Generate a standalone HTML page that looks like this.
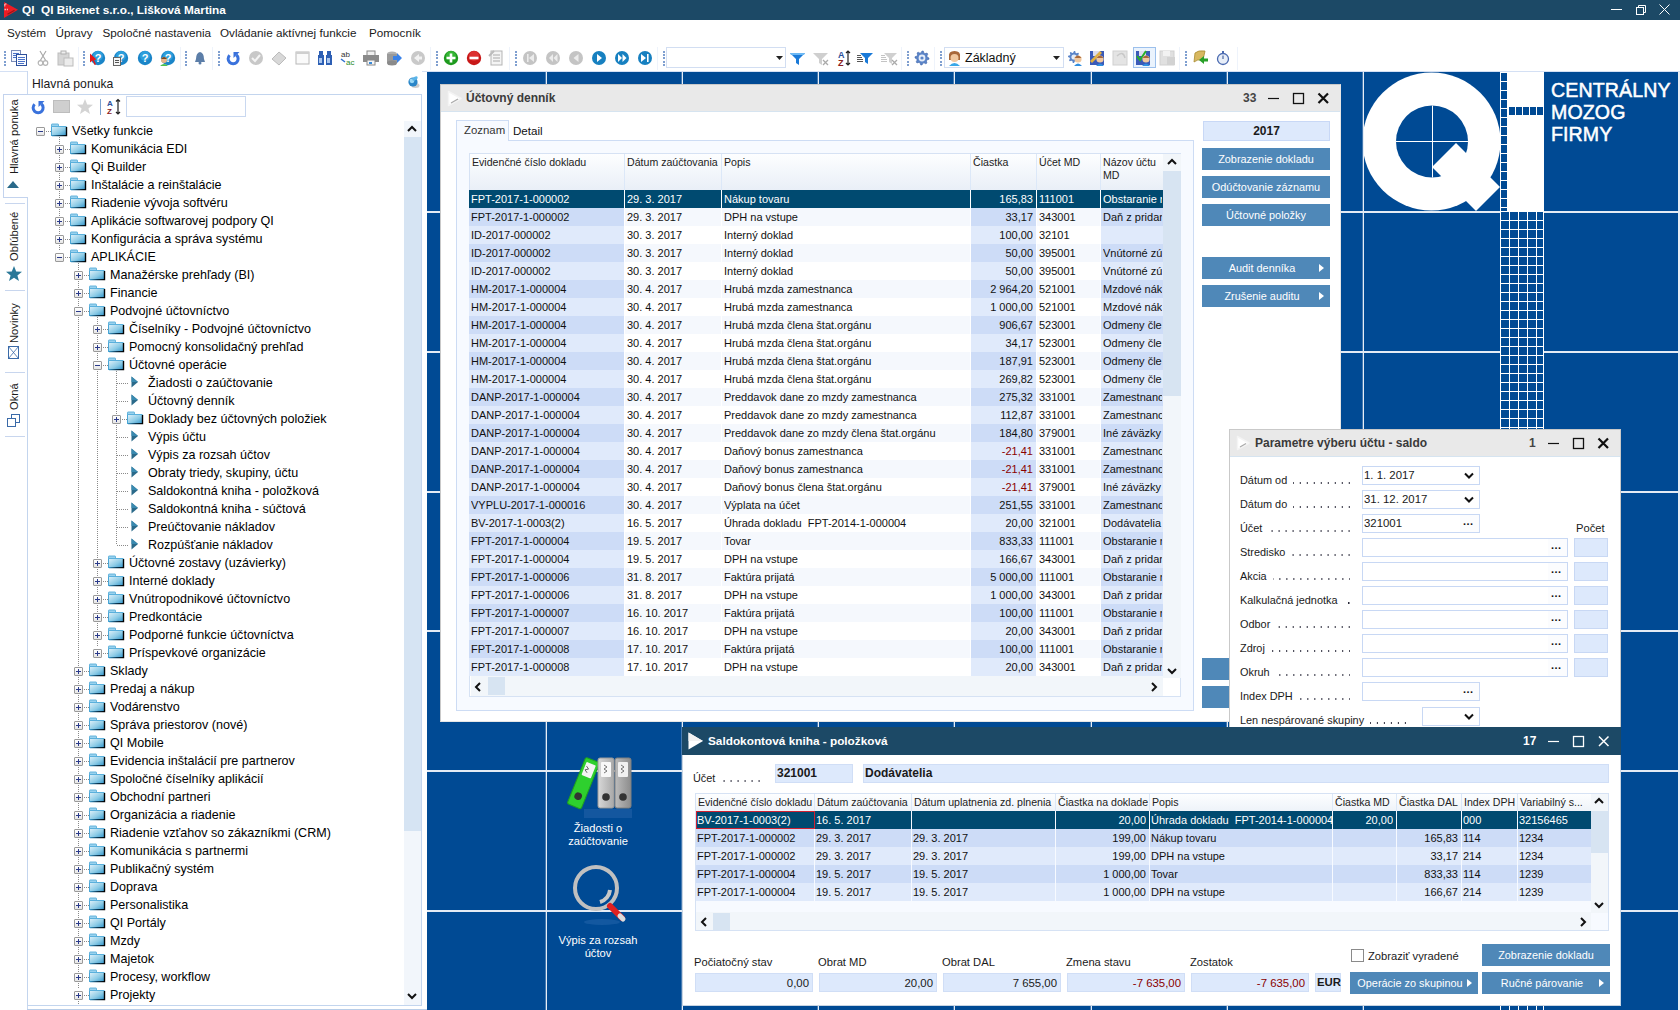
<!DOCTYPE html>
<html><head><meta charset="utf-8">
<style>
*{box-sizing:border-box;margin:0;padding:0}
html,body{width:1680px;height:1010px;overflow:hidden;background:#fff;font-family:"Liberation Sans",sans-serif;color:#1a1a1a}
.a{position:absolute}
.t{position:absolute;height:16px;line-height:16px;white-space:nowrap}
svg{position:absolute;overflow:visible}
</style></head><body>
<div class="a " style="left:0px;top:0px;width:1680px;height:20px;background:#1c4966"></div>
<svg style="left:0;top:0" width="24" height="20"><path d="M4 2 L18 9.7 L4 18 Z" fill="#ec1c24"/><path d="M7.5 14.2 L14.5 10.2" stroke="#9a1418" stroke-width="1.2"/><path d="M4.8 6.5 V4 H6.5" stroke="#f8c8c8" stroke-width="1" fill="none"/><path d="M4.5 9.5 H8" stroke="#f4b8b8" stroke-width="1.4" stroke-dasharray="1.5 0.8"/></svg>
<div class="t " style="left:22px;top:2px;color:#fff;font-weight:bold;font-size:11.8px">QI&nbsp; QI Bikenet s.r.o., Lišková Martina</div>
<svg style="left:1600px;top:0" width="80" height="20" fill="none" stroke="#fff" stroke-width="1"><path d="M11 9.5 H22"/><rect x="36.5" y="7.5" width="7" height="7"/><path d="M38.5 7.5 V5.5 H45.5 V12.5 H43.5"/><path d="M59.5 4.5 L69.5 14.5 M69.5 4.5 L59.5 14.5"/></svg>
<div class="t " style="left:7px;top:25px;font-size:11.7px;color:#1a1a1a">Systém</div>
<div class="t " style="left:55.5px;top:25px;font-size:11.7px;color:#1a1a1a">Úpravy</div>
<div class="t " style="left:102.5px;top:25px;font-size:11.7px;color:#1a1a1a">Spoločné nastavenia</div>
<div class="t " style="left:220px;top:25px;font-size:11.7px;color:#1a1a1a">Ovládanie aktívnej funkcie</div>
<div class="t " style="left:369px;top:25px;font-size:11.7px;color:#1a1a1a">Pomocník</div>
<div class="a " style="left:0px;top:71px;width:1680px;height:1px;background:#d4e0f4"></div>
<div class="a " style="left:4px;top:51.0px;width:2px;height:2px;background:#7f9fd0"></div><div class="a " style="left:4px;top:54.2px;width:2px;height:2px;background:#7f9fd0"></div><div class="a " style="left:4px;top:57.4px;width:2px;height:2px;background:#7f9fd0"></div><div class="a " style="left:4px;top:60.6px;width:2px;height:2px;background:#7f9fd0"></div><div class="a " style="left:4px;top:63.8px;width:2px;height:2px;background:#7f9fd0"></div>
<svg style="left:11px;top:50px" width="16" height="16" viewBox="0 0 16 16"><rect x="0.5" y="0.5" width="9" height="11" fill="#f4f7fd" stroke="#7a8cb8"/><path d="M2 3.5h6M2 5.5h6M2 7.5h6" stroke="#4a72c8"/><rect x="5.5" y="4.5" width="10" height="11" fill="#fafcff" stroke="#2d4f9a"/><path d="M7 7.5h7M7 9.5h7M7 11.5h7M7 13.5h6" stroke="#4a72c8"/></svg>
<svg style="left:37px;top:50px" width="12" height="16" viewBox="0 0 12 16"><path d="M3 1 L9 11 M9 1 L3 11" stroke="#a9a9a9" stroke-width="1.2"/><circle cx="3.5" cy="13" r="2.3" fill="none" stroke="#b5b5b5" stroke-width="1.2"/><circle cx="8.5" cy="13" r="2.3" fill="none" stroke="#b5b5b5" stroke-width="1.2"/></svg>
<svg style="left:57px;top:50px" width="16" height="16" viewBox="0 0 16 16"><rect x="1" y="3" width="11" height="12" fill="#d6d6d6" stroke="#bdbdbd"/><rect x="4" y="1" width="5" height="3" fill="#eee" stroke="#b0b0b0"/><rect x="7" y="8" width="9" height="8" fill="#ececec" stroke="#bdbdbd"/></svg>
<div class="a " style="left:83px;top:51.0px;width:2px;height:2px;background:#7f9fd0"></div><div class="a " style="left:83px;top:54.2px;width:2px;height:2px;background:#7f9fd0"></div><div class="a " style="left:83px;top:57.4px;width:2px;height:2px;background:#7f9fd0"></div><div class="a " style="left:83px;top:60.6px;width:2px;height:2px;background:#7f9fd0"></div><div class="a " style="left:83px;top:63.8px;width:2px;height:2px;background:#7f9fd0"></div>
<svg style="left:90px;top:50px" width="16" height="16" viewBox="0 0 16 16"><circle cx="8" cy="8" r="7.2" fill="#1a85c8"/><circle cx="8" cy="6" r="5" fill="#3ab0ea" opacity="0.6"/><text x="8" y="12" font-size="11" font-weight="bold" fill="#fff" text-anchor="middle" font-family="Liberation Sans">?</text><path d="M0 3.5 L6.5 9.5 L4 10 L6 14.5 L4.6 15 L2.6 10.6 L0 12.5Z" fill="#e81818"/></svg>
<svg style="left:113px;top:50px" width="16" height="16" viewBox="0 0 16 16"><circle cx="8" cy="8" r="7.2" fill="#1a85c8"/><circle cx="8" cy="6" r="5" fill="#3ab0ea" opacity="0.6"/><text x="8" y="12" font-size="11" font-weight="bold" fill="#fff" text-anchor="middle" font-family="Liberation Sans">?</text><rect x="0.5" y="7.5" width="7" height="8" fill="#f6f6f6" stroke="#666"/><path d="M2 10.5h4M2 12.5h4" stroke="#555"/></svg>
<svg style="left:137px;top:50px" width="16" height="16" viewBox="0 0 16 16"><circle cx="8" cy="8" r="7.2" fill="#1a85c8"/><circle cx="8" cy="6" r="5" fill="#3ab0ea" opacity="0.6"/><text x="8" y="12" font-size="11" font-weight="bold" fill="#fff" text-anchor="middle" font-family="Liberation Sans">?</text></svg>
<svg style="left:160px;top:50px" width="16" height="16" viewBox="0 0 16 16"><circle cx="8" cy="8" r="7.2" fill="#1a85c8"/><circle cx="8" cy="6" r="5" fill="#3ab0ea" opacity="0.6"/><text x="8" y="12" font-size="11" font-weight="bold" fill="#fff" text-anchor="middle" font-family="Liberation Sans">?</text><circle cx="4" cy="10" r="3" fill="#e8b48a"/><path d="M1 9 Q4 5 7 9" fill="#7a4a24"/><path d="M0 16 Q4 12 8 16Z" fill="#4cc04c"/></svg>
<div class="a " style="left:185px;top:51.0px;width:2px;height:2px;background:#7f9fd0"></div><div class="a " style="left:185px;top:54.2px;width:2px;height:2px;background:#7f9fd0"></div><div class="a " style="left:185px;top:57.4px;width:2px;height:2px;background:#7f9fd0"></div><div class="a " style="left:185px;top:60.6px;width:2px;height:2px;background:#7f9fd0"></div><div class="a " style="left:185px;top:63.8px;width:2px;height:2px;background:#7f9fd0"></div>
<svg style="left:194px;top:50px" width="12" height="16" viewBox="0 0 12 16"><path d="M6 2 Q2 3 2 9 L1 12 H11 L10 9 Q10 3 6 2Z" fill="#5c7ea8"/><circle cx="6" cy="13" r="1.5" fill="#5c7ea8"/></svg>
<div class="a " style="left:218px;top:51.0px;width:2px;height:2px;background:#7f9fd0"></div><div class="a " style="left:218px;top:54.2px;width:2px;height:2px;background:#7f9fd0"></div><div class="a " style="left:218px;top:57.4px;width:2px;height:2px;background:#7f9fd0"></div><div class="a " style="left:218px;top:60.6px;width:2px;height:2px;background:#7f9fd0"></div><div class="a " style="left:218px;top:63.8px;width:2px;height:2px;background:#7f9fd0"></div>
<svg style="left:226px;top:50px" width="16" height="16" viewBox="0 0 16 16"><path d="M3.6 5.2 A5 5 0 1 0 10.4 5.0" fill="none" stroke="#3a72dc" stroke-width="3"/><path d="M7.5 2 H13.5 L7.5 8Z" fill="#3a72dc"/></svg>
<svg style="left:248px;top:50px" width="16" height="16" viewBox="0 0 16 16"><circle cx="8" cy="8" r="7" fill="#c8c8c8"/><path d="M4 8 L7 11 L12 5" stroke="#f4f4f4" stroke-width="2" fill="none"/></svg>
<svg style="left:271px;top:50px" width="16" height="16" viewBox="0 0 16 16"><path d="M1 9 L8 2 L15 8 L8 15Z" fill="#d8d8d8" stroke="#bbb"/></svg>
<svg style="left:295px;top:50px" width="16" height="16" viewBox="0 0 16 16"><rect x="1" y="2" width="13" height="12" fill="#fafafa" stroke="#b8b8b8"/><rect x="1" y="2" width="13" height="2" fill="#cfcfcf"/></svg>
<svg style="left:317px;top:50px" width="16" height="16" viewBox="0 0 16 16"><rect x="1" y="5" width="6" height="10" fill="#2d5fb4"/><rect x="9" y="5" width="6" height="10" fill="#2d5fb4"/><rect x="2" y="1" width="4" height="5" fill="#2d5fb4"/><rect x="10" y="1" width="4" height="5" fill="#2d5fb4"/><rect x="2" y="8" width="3" height="5" fill="#aac6ee"/><rect x="10" y="8" width="3" height="5" fill="#aac6ee"/></svg>
<svg style="left:340px;top:50px" width="16" height="16" viewBox="0 0 16 16"><text x="1" y="7" font-size="8" fill="#333" font-family="Liberation Sans">ab</text><text x="6" y="15" font-size="8" fill="#2a8a2a" font-family="Liberation Sans">ac</text><path d="M1 9 L5 12" stroke="#3070d0" stroke-width="1.5"/></svg>
<svg style="left:363px;top:50px" width="16" height="16" viewBox="0 0 16 16"><rect x="4" y="1" width="8" height="5" fill="#f0f0f0" stroke="#888"/><rect x="0" y="5" width="16" height="7" fill="#8a8a8a"/><rect x="4" y="10" width="8" height="5" fill="#f5f5f5" stroke="#888"/><rect x="6" y="12" width="3" height="2" fill="#3a8ad8"/></svg>
<svg style="left:386px;top:50px" width="16" height="16" viewBox="0 0 16 16"><ellipse cx="6" cy="4" rx="5" ry="2.5" fill="#b0b0b0"/><rect x="1" y="4" width="10" height="9" fill="#9a9a9a"/><ellipse cx="6" cy="13" rx="5" ry="2.5" fill="#8a8a8a"/><path d="M7 6 H11 V3 L16 8 L11 13 V10 H7Z" fill="#3a82e8"/></svg>
<svg style="left:410px;top:50px" width="16" height="16" viewBox="0 0 16 16"><circle cx="8" cy="8" r="7" fill="#c9c9c9"/><path d="M9 4 L4 8 L9 12 V9.5 H12 V6.5 H9Z" fill="#f2f2f2"/></svg>
<div class="a " style="left:436px;top:51.0px;width:2px;height:2px;background:#7f9fd0"></div><div class="a " style="left:436px;top:54.2px;width:2px;height:2px;background:#7f9fd0"></div><div class="a " style="left:436px;top:57.4px;width:2px;height:2px;background:#7f9fd0"></div><div class="a " style="left:436px;top:60.6px;width:2px;height:2px;background:#7f9fd0"></div><div class="a " style="left:436px;top:63.8px;width:2px;height:2px;background:#7f9fd0"></div>
<svg style="left:443px;top:50px" width="16" height="16" viewBox="0 0 16 16"><circle cx="8" cy="8" r="7.2" fill="#1e9a1e"/><circle cx="8" cy="6" r="5" fill="#4cd04c" opacity="0.5"/><path d="M8 3.5V12.5M3.5 8H12.5" stroke="#fff" stroke-width="2.6"/></svg>
<svg style="left:466px;top:50px" width="16" height="16" viewBox="0 0 16 16"><circle cx="8" cy="8" r="7.2" fill="#c81818"/><circle cx="8" cy="6" r="5" fill="#f04848" opacity="0.5"/><path d="M3.5 8H12.5" stroke="#fff" stroke-width="2.6"/></svg>
<svg style="left:488px;top:50px" width="16" height="16" viewBox="0 0 16 16"><rect x="3" y="1" width="11" height="14" fill="#f4f4f4" stroke="#b5b5b5"/><path d="M5 5h7M5 8h7M5 11h7" stroke="#aaa"/><path d="M1 6 L6 1" stroke="#bbb" stroke-width="2"/></svg>
<div class="a " style="left:515px;top:51.0px;width:2px;height:2px;background:#7f9fd0"></div><div class="a " style="left:515px;top:54.2px;width:2px;height:2px;background:#7f9fd0"></div><div class="a " style="left:515px;top:57.4px;width:2px;height:2px;background:#7f9fd0"></div><div class="a " style="left:515px;top:60.6px;width:2px;height:2px;background:#7f9fd0"></div><div class="a " style="left:515px;top:63.8px;width:2px;height:2px;background:#7f9fd0"></div>
<svg style="left:522px;top:50px" width="16" height="16" viewBox="0 0 16 16"><circle cx="8" cy="8" r="7" fill="#c4c4c4"/><path d="M5 4h1.6v8H5Z M12 4 L7 8 L12 12Z" fill="#ececec"/></svg>
<svg style="left:545px;top:50px" width="16" height="16" viewBox="0 0 16 16"><circle cx="8" cy="8" r="7" fill="#c4c4c4"/><path d="M8 4 L4 8 L8 12Z M12.5 4 L8.5 8 L12.5 12Z" fill="#ececec"/></svg>
<svg style="left:568px;top:50px" width="16" height="16" viewBox="0 0 16 16"><circle cx="8" cy="8" r="7" fill="#c4c4c4"/><path d="M10.5 4 L5.5 8 L10.5 12Z" fill="#ececec"/></svg>
<svg style="left:591px;top:50px" width="16" height="16" viewBox="0 0 16 16"><circle cx="8" cy="8" r="7" fill="#1780c0"/><path d="M6 4 L11 8 L6 12Z" fill="#fff"/></svg>
<svg style="left:614px;top:50px" width="16" height="16" viewBox="0 0 16 16"><circle cx="8" cy="8" r="7" fill="#1780c0"/><path d="M4 4 L8 8 L4 12Z M8.5 4 L12.5 8 L8.5 12Z" fill="#fff"/></svg>
<svg style="left:637px;top:50px" width="16" height="16" viewBox="0 0 16 16"><circle cx="8" cy="8" r="7" fill="#1780c0"/><path d="M4 4 L9 8 L4 12Z M10 4h1.6v8H10Z" fill="#fff"/></svg>
<div class="a " style="left:663px;top:51.0px;width:2px;height:2px;background:#7f9fd0"></div><div class="a " style="left:663px;top:54.2px;width:2px;height:2px;background:#7f9fd0"></div><div class="a " style="left:663px;top:57.4px;width:2px;height:2px;background:#7f9fd0"></div><div class="a " style="left:663px;top:60.6px;width:2px;height:2px;background:#7f9fd0"></div><div class="a " style="left:663px;top:63.8px;width:2px;height:2px;background:#7f9fd0"></div>
<div class="a " style="left:666px;top:47px;width:120px;height:21px;border:1px solid #d2def2;background:#fff"></div>
<svg style="left:775px;top:50px" width="10" height="16" viewBox="0 0 10 16"><path d="M1 6 H8 L4.5 10Z" fill="#222"/></svg>
<svg style="left:790px;top:50px" width="16" height="16" viewBox="0 0 16 16"><path d="M0 3 H15 L9 9 V15 L6 13 V9Z" fill="#1a7ad8"/><path d="M0 3 H15 L14 5 H1Z" fill="#6cb8f4"/></svg>
<svg style="left:813px;top:50px" width="16" height="16" viewBox="0 0 16 16"><path d="M0 3 H15 L9 9 V15 L6 13 V9Z" fill="#cfcfcf"/><path d="M10 10 L15 15 M15 10 L10 15" stroke="#aaa" stroke-width="1.3"/></svg>
<svg style="left:838px;top:50px" width="13" height="16" viewBox="0 0 13 16"><text x="0" y="7.5" font-size="9" font-weight="bold" fill="#2b4f9a" font-family="Liberation Sans">A</text><text x="0" y="15.5" font-size="9" font-weight="bold" fill="#8a2020" font-family="Liberation Sans">Z</text><path d="M10 1V15M8 3L10 1L12 3M8 13L10 15L12 13" stroke="#222" stroke-width="1.2" fill="none"/></svg>
<svg style="left:857px;top:50px" width="16" height="16" viewBox="0 0 16 16"><path d="M3 3 H16 L11 8 V14 L8 12 V8Z" fill="#1a7ad8"/><path d="M0 5.5h4M0 7.5h5M0 9.5h6M0 11.5h6" stroke="#555" stroke-width="1"/></svg>
<svg style="left:881px;top:50px" width="16" height="16" viewBox="0 0 16 16"><path d="M3 3 H16 L11 8 V14 L8 12 V8Z" fill="#d0d0d0"/><path d="M0 5.5h4M0 7.5h5M0 9.5h6M0 11.5h6" stroke="#c4c4c4" stroke-width="1"/><path d="M11 10 L16 15 M16 10 L11 15" stroke="#aaa" stroke-width="1.3"/></svg>
<div class="a " style="left:907px;top:51.0px;width:2px;height:2px;background:#7f9fd0"></div><div class="a " style="left:907px;top:54.2px;width:2px;height:2px;background:#7f9fd0"></div><div class="a " style="left:907px;top:57.4px;width:2px;height:2px;background:#7f9fd0"></div><div class="a " style="left:907px;top:60.6px;width:2px;height:2px;background:#7f9fd0"></div><div class="a " style="left:907px;top:63.8px;width:2px;height:2px;background:#7f9fd0"></div>
<svg style="left:915px;top:50px" width="14" height="16" viewBox="0 0 14 16"><path d="M7.00,1.00 L8.37,1.13 L8.99,3.20 L9.89,3.68 L11.95,3.05 L12.82,4.11 L11.80,6.01 L12.10,6.99 L14.00,8.00 L13.87,9.37 L11.80,9.99 L11.32,10.89 L11.95,12.95 L10.89,13.82 L8.99,12.80 L8.01,13.10 L7.00,15.00 L5.63,14.87 L5.01,12.80 L4.11,12.32 L2.05,12.95 L1.18,11.89 L2.20,9.99 L1.90,9.01 L0.00,8.00 L0.13,6.63 L2.20,6.01 L2.68,5.11 L2.05,3.05 L3.11,2.18 L5.01,3.20 L5.99,2.90Z" fill="#5a84c8" stroke="#3a62a8" stroke-width="0.6"/><circle cx="7" cy="8" r="3.4" fill="#e4ecf8"/><circle cx="7" cy="8" r="1.6" fill="#5a84c8"/></svg>
<div class="a " style="left:940px;top:51.0px;width:2px;height:2px;background:#7f9fd0"></div><div class="a " style="left:940px;top:54.2px;width:2px;height:2px;background:#7f9fd0"></div><div class="a " style="left:940px;top:57.4px;width:2px;height:2px;background:#7f9fd0"></div><div class="a " style="left:940px;top:60.6px;width:2px;height:2px;background:#7f9fd0"></div><div class="a " style="left:940px;top:63.8px;width:2px;height:2px;background:#7f9fd0"></div>
<div class="a " style="left:944px;top:47px;width:120px;height:21px;border:1px solid #d2def2;background:#fff"></div>
<svg style="left:947px;top:50px" width="16" height="16" viewBox="0 0 16 16"><path d="M2 7 Q1 1 7.5 1 Q14 1 13 7 L13 10 H2Z" fill="#a8683a"/><circle cx="7.5" cy="8" r="4" fill="#f0c8a0"/><path d="M2 16 Q7.5 10 13 16Z" fill="#3aa8e8"/></svg>
<div class="t " style="left:965px;top:50px;font-size:12.5px;color:#111">Základný</div>
<svg style="left:1052px;top:50px" width="10" height="16" viewBox="0 0 10 16"><path d="M1 6 H8 L4.5 10Z" fill="#222"/></svg>
<svg style="left:1068px;top:50px" width="16" height="16" viewBox="0 0 16 16"><path d="M6.00,1.00 L7.17,1.12 L7.68,2.93 L8.44,3.34 L10.24,2.76 L10.99,3.67 L10.07,5.32 L10.32,6.14 L12.00,7.00 L11.88,8.17 L10.07,8.68 L9.66,9.44 L10.24,11.24 L9.33,11.99 L7.68,11.07 L6.86,11.32 L6.00,13.00 L4.83,12.88 L4.32,11.07 L3.56,10.66 L1.76,11.24 L1.01,10.33 L1.93,8.68 L1.68,7.86 L0.00,7.00 L0.12,5.83 L1.93,5.32 L2.34,4.56 L1.76,2.76 L2.67,2.01 L4.32,2.93 L5.14,2.68Z" fill="#5a84c8"/><circle cx="6" cy="7" r="2.6" fill="#e4ecf8"/><circle cx="10" cy="9" r="3.6" fill="#f0c8a0"/><path d="M6.5 8 Q10 3 13.5 8" fill="#a8683a"/><path d="M6 16 Q10 11 14 16Z" fill="#2f8ee0"/></svg>
<svg style="left:1090px;top:50px" width="16" height="16" viewBox="0 0 16 16"><rect x="0" y="1" width="14" height="14" fill="#3a5ab8"/><rect x="3" y="1" width="7" height="5" fill="#dde"/><path d="M0 11 L10 1 L12 3 L2 13Z" fill="#e0b040"/><circle cx="10" cy="9" r="3.6" fill="#f0c8a0"/><path d="M6.5 8 Q10 3 13.5 8" fill="#a8683a"/><path d="M6 16 Q10 11 14 16Z" fill="#2f8ee0"/></svg>
<svg style="left:1113px;top:50px" width="16" height="16" viewBox="0 0 16 16"><rect x="0" y="1" width="14" height="14" fill="#e4e4e4" stroke="#d0d0d0"/><path d="M4 6 Q10 0 12 8" stroke="#c8c8c8" fill="none" stroke-width="1.5"/></svg>
<div class="a " style="left:1133px;top:47px;width:23px;height:21px;border:1px solid #9cc0ec;background:#eaf3fd"></div>
<svg style="left:1136px;top:50px" width="16" height="16" viewBox="0 0 16 16"><rect x="0" y="1" width="14" height="14" fill="#3a5ab8"/><rect x="3" y="1" width="7" height="5" fill="#dde"/><path d="M1 6 L4 10 L10 1" stroke="#28b028" stroke-width="2" fill="none"/><circle cx="10" cy="9" r="3.6" fill="#f0c8a0"/><path d="M6.5 8 Q10 3 13.5 8" fill="#a8683a"/><path d="M6 16 Q10 11 14 16Z" fill="#2f8ee0"/></svg>
<svg style="left:1160px;top:50px" width="16" height="16" viewBox="0 0 16 16"><rect x="0" y="1" width="14" height="14" fill="#e0e0e0" stroke="#d0d0d0"/><rect x="3" y="1" width="7" height="5" fill="#f2f2f2"/><rect x="7" y="7" width="8" height="8" fill="#d2d2d2"/></svg>
<div class="a " style="left:1185px;top:51.0px;width:2px;height:2px;background:#7f9fd0"></div><div class="a " style="left:1185px;top:54.2px;width:2px;height:2px;background:#7f9fd0"></div><div class="a " style="left:1185px;top:57.4px;width:2px;height:2px;background:#7f9fd0"></div><div class="a " style="left:1185px;top:60.6px;width:2px;height:2px;background:#7f9fd0"></div><div class="a " style="left:1185px;top:63.8px;width:2px;height:2px;background:#7f9fd0"></div>
<svg style="left:1193px;top:50px" width="16" height="16" viewBox="0 0 16 16"><path d="M2 3 Q5 0 12 1 L10 10 Q4 9 1 12Z" fill="#d8b860" stroke="#a88a30" stroke-width="0.8"/><path d="M6 10 L11 6 V8.5 H15 V11.5 H11 V14Z" fill="#28a028"/></svg>
<svg style="left:1217px;top:50px" width="12" height="16" viewBox="0 0 12 16"><circle cx="6" cy="9" r="5.5" fill="#e8eef8" stroke="#4a6ab0" stroke-width="1.3"/><rect x="5" y="1" width="2" height="3" fill="#4a6ab0"/><path d="M6 9 V5.5" stroke="#2a4a90" stroke-width="1"/></svg>
<div class="a " style="left:2px;top:47px;width:77px;height:23px;border-right:1px solid #eef3fb"></div>
<div class="a " style="left:81px;top:47px;width:100px;height:23px;border-right:1px solid #eef3fb"></div>
<div class="a " style="left:183px;top:47px;width:30px;height:23px;border-right:1px solid #eef3fb"></div>
<div class="a " style="left:216px;top:47px;width:215px;height:23px;border-right:1px solid #eef3fb"></div>
<div class="a " style="left:433px;top:47px;width:77px;height:23px;border-right:1px solid #eef3fb"></div>
<div class="a " style="left:512px;top:47px;width:146px;height:23px;border-right:1px solid #eef3fb"></div>
<div class="a " style="left:660px;top:47px;width:242px;height:23px;border-right:1px solid #eef3fb"></div>
<div class="a " style="left:904px;top:47px;width:31px;height:23px;border-right:1px solid #eef3fb"></div>
<div class="a " style="left:937px;top:47px;width:243px;height:23px;border-right:1px solid #eef3fb"></div>
<div class="a " style="left:1182px;top:47px;width:56px;height:23px;border-right:1px solid #eef3fb"></div>
<div class="a " style="left:27px;top:71px;width:1px;height:939px;background:#c9d8f0"></div>
<div class="a " style="left:3px;top:94px;width:25px;height:104px;border:1px solid #c3d3ee;border-right:none;background:#fff"></div>
<div class="t" style="left:14px;top:174px;transform-origin:0 0;transform:rotate(-90deg);font-size:11.2px;line-height:16px;height:16px;margin-left:-8px;color:#1a1a1a">Hlavná ponuka</div>
<svg style="left:6px;top:179px" width="16" height="10"><path d="M1 9 L7 2 L13 9Z" fill="#2a6a8a"/></svg>
<div class="a " style="left:5px;top:203px;width:20px;height:1px;background:#c8d6ee"></div>
<div class="t" style="left:14px;top:261px;transform-origin:0 0;transform:rotate(-90deg);font-size:11.2px;line-height:16px;height:16px;margin-left:-8px;color:#1a1a1a">Obľúbené</div>
<svg style="left:5px;top:265px" width="18" height="18"><path d="M9 1 L11.2 6.6 L17 6.8 L12.4 10.4 L14 16 L9 12.8 L4 16 L5.6 10.4 L1 6.8 L6.8 6.6Z" fill="#2a7898"/></svg>
<div class="a " style="left:5px;top:290px;width:20px;height:1px;background:#c8d6ee"></div>
<div class="t" style="left:14px;top:343px;transform-origin:0 0;transform:rotate(-90deg);font-size:11.2px;line-height:16px;height:16px;margin-left:-8px;color:#1a1a1a">Novinky</div>
<svg style="left:8px;top:346px" width="12" height="14"><rect x="0.5" y="0.5" width="10" height="12" fill="none" stroke="#3a6aa8"/><path d="M0.5 0.5 L10.5 12.5 M10.5 0.5 L0.5 12.5" stroke="#3a6aa8" stroke-width="0.8"/></svg>
<div class="a " style="left:5px;top:372px;width:20px;height:1px;background:#c8d6ee"></div>
<div class="t" style="left:14px;top:410px;transform-origin:0 0;transform:rotate(-90deg);font-size:11.2px;line-height:16px;height:16px;margin-left:-8px;color:#1a1a1a">Okná</div>
<svg style="left:7px;top:414px" width="14" height="14"><rect x="4.5" y="0.5" width="8" height="8" fill="#fff" stroke="#3a6aa8"/><rect x="0.5" y="4.5" width="8" height="8" fill="#fff" stroke="#3a6aa8"/></svg>
<div class="a " style="left:5px;top:436px;width:20px;height:1px;background:#c8d6ee"></div>
<div class="a " style="left:28px;top:71px;width:394px;height:23px;background:#fff"></div>
<div class="a " style="left:27px;top:94px;width:395px;height:912px;border:1px solid #c3d5ee;background:#fff"></div>
<div class="a " style="left:27px;top:95px;width:1px;height:102px;background:#fff"></div>
<div class="t " style="left:32px;top:76px;font-size:12.2px;color:#1a1a1a">Hlavná ponuka</div>
<svg style="left:406px;top:75px" width="16" height="16"><ellipse cx="9.5" cy="10.5" rx="4" ry="2.5" fill="#999" opacity="0.5"/><circle cx="7" cy="7" r="4.6" fill="#2a86c8"/><circle cx="6" cy="5.8" r="2.4" fill="#9ad8f6"/><ellipse cx="9" cy="3.5" rx="3" ry="1.6" fill="#5ab4e8" transform="rotate(-30 9 3.5)"/></svg>
<svg style="left:31px;top:99px" width="16" height="16"><path d="M3.6 5.2 A5 5 0 1 0 10.4 5.0" fill="none" stroke="#3a72dc" stroke-width="3"/><path d="M7.5 2 H13.5 L7.5 8Z" fill="#3a72dc"/></svg>
<div class="a " style="left:53px;top:100px;width:17px;height:13px;background:#cfcfcf;border:1px solid #bdbdbd"></div>
<svg style="left:76px;top:98px" width="18" height="18"><path d="M9 1 L11.2 6.6 L17 6.8 L12.4 10.4 L14 16 L9 12.8 L4 16 L5.6 10.4 L1 6.8 L6.8 6.6Z" fill="#d4d4d4"/></svg>
<div class="a " style="left:100px;top:99px;width:1px;height:16px;background:#7aa0d0"></div>
<svg style="left:107px;top:98px" width="16" height="18"><text x="0" y="8" font-size="8" font-weight="bold" fill="#2b4f9a" font-family="Liberation Sans">A</text><text x="0" y="16" font-size="8" font-weight="bold" fill="#8a2020" font-family="Liberation Sans">Z</text><path d="M11 1.5V16M9 3.5L11 1.5L13 3.5M9 14L11 16L13 14" stroke="#222" stroke-width="1.2" fill="none"/></svg>
<div class="a " style="left:126px;top:96px;width:120px;height:21px;border:1px solid #c9d8f0;background:#fff"></div>
<div class="a " style="left:27px;top:1009px;width:400px;height:1px;background:#b8cde8"></div>
<div class="a " style="left:404px;top:121px;width:17px;height:884px;background:#f2f6fb"></div>
<div class="a " style="left:404px;top:137px;width:17px;height:694px;background:#d6e4f3"></div>
<svg style="left:405px;top:123px" width="14" height="12"><path d="M3 8 L7 4 L11 8" stroke="#111" stroke-width="2" fill="none"/></svg>
<svg style="left:405px;top:990px" width="14" height="12"><path d="M3 4 L7 8 L11 4" stroke="#111" stroke-width="2" fill="none"/></svg>
<div class="a " style="left:59px;top:137px;width:1px;height:114px;background:repeating-linear-gradient(180deg,#8a8a8a 0 1px,transparent 1px 2px)"></div>
<div class="a " style="left:78px;top:263px;width:1px;height:726px;background:repeating-linear-gradient(180deg,#8a8a8a 0 1px,transparent 1px 2px)"></div>
<div class="a " style="left:97px;top:317px;width:1px;height:330px;background:repeating-linear-gradient(180deg,#8a8a8a 0 1px,transparent 1px 2px)"></div>
<div class="a " style="left:116px;top:371px;width:1px;height:174px;background:repeating-linear-gradient(180deg,#8a8a8a 0 1px,transparent 1px 2px)"></div>
<div class="a " style="left:78px;top:999px;width:1px;height:6px;background:repeating-linear-gradient(180deg,#8a8a8a 0 1px,transparent 1px 2px)"></div>
<svg style="left:0;top:0" width="0" height="0"><defs><linearGradient id="fgb" x1="0" y1="0" x2="1" y2="1"><stop offset="0" stop-color="#e2f2fa"/><stop offset="0.55" stop-color="#8ccbe6"/><stop offset="1" stop-color="#2a90c8"/></linearGradient><linearGradient id="fgd" x1="0" y1="0" x2="1" y2="0"><stop offset="0" stop-color="#3a98c8"/><stop offset="0.5" stop-color="#0a3a58"/><stop offset="1" stop-color="#000"/></linearGradient></defs></svg>
<div class="a " style="left:36px;top:127px;width:9px;height:9px;border:1px solid #9a9a9a;border-radius:1px;background:linear-gradient(#fff,#e6e6e6)"></div>
<div class="a " style="left:38px;top:131px;width:5px;height:1px;background:#2a3a8a"></div>
<div class="a " style="left:46px;top:131px;width:5px;height:1px;background:repeating-linear-gradient(90deg,#8a8a8a 0 1px,transparent 1px 2px)"></div>
<svg style="left:51px;top:123px" width="16" height="14"><rect x="0.5" y="1" width="7" height="3" rx="0.5" fill="#9ad2ee" stroke="#5aaed8" stroke-width="0.9"/><rect x="0.5" y="3.5" width="15" height="9.5" fill="url(#fgb)"/><path d="M0.5 3.5 H15.5" stroke="#5ab0dc" stroke-width="1"/><path d="M0.5 3.5 V13" stroke="#4aa6d6" stroke-width="1"/><path d="M1 12.6 H15.5 V4" stroke="url(#fgd)" stroke-width="1.4" fill="none"/></svg>
<div class="t " style="left:72px;top:123px;font-size:12.55px;color:#000">Všetky funkcie</div>
<div class="a " style="left:55px;top:145px;width:9px;height:9px;border:1px solid #9a9a9a;border-radius:1px;background:linear-gradient(#fff,#e6e6e6)"></div>
<div class="a " style="left:57px;top:149px;width:5px;height:1px;background:#2a3a8a"></div>
<div class="a " style="left:59px;top:147px;width:1px;height:5px;background:#2a3a8a"></div>
<div class="a " style="left:65px;top:149px;width:5px;height:1px;background:repeating-linear-gradient(90deg,#8a8a8a 0 1px,transparent 1px 2px)"></div>
<svg style="left:70px;top:141px" width="16" height="14"><rect x="0.5" y="1" width="7" height="3" rx="0.5" fill="#9ad2ee" stroke="#5aaed8" stroke-width="0.9"/><rect x="0.5" y="3.5" width="15" height="9.5" fill="url(#fgb)"/><path d="M0.5 3.5 H15.5" stroke="#5ab0dc" stroke-width="1"/><path d="M0.5 3.5 V13" stroke="#4aa6d6" stroke-width="1"/><path d="M1 12.6 H15.5 V4" stroke="url(#fgd)" stroke-width="1.4" fill="none"/></svg>
<div class="t " style="left:91px;top:141px;font-size:12.55px;color:#000">Komunikácia EDI</div>
<div class="a " style="left:55px;top:163px;width:9px;height:9px;border:1px solid #9a9a9a;border-radius:1px;background:linear-gradient(#fff,#e6e6e6)"></div>
<div class="a " style="left:57px;top:167px;width:5px;height:1px;background:#2a3a8a"></div>
<div class="a " style="left:59px;top:165px;width:1px;height:5px;background:#2a3a8a"></div>
<div class="a " style="left:65px;top:167px;width:5px;height:1px;background:repeating-linear-gradient(90deg,#8a8a8a 0 1px,transparent 1px 2px)"></div>
<svg style="left:70px;top:159px" width="16" height="14"><rect x="0.5" y="1" width="7" height="3" rx="0.5" fill="#9ad2ee" stroke="#5aaed8" stroke-width="0.9"/><rect x="0.5" y="3.5" width="15" height="9.5" fill="url(#fgb)"/><path d="M0.5 3.5 H15.5" stroke="#5ab0dc" stroke-width="1"/><path d="M0.5 3.5 V13" stroke="#4aa6d6" stroke-width="1"/><path d="M1 12.6 H15.5 V4" stroke="url(#fgd)" stroke-width="1.4" fill="none"/></svg>
<div class="t " style="left:91px;top:159px;font-size:12.55px;color:#000">Qi Builder</div>
<div class="a " style="left:55px;top:181px;width:9px;height:9px;border:1px solid #9a9a9a;border-radius:1px;background:linear-gradient(#fff,#e6e6e6)"></div>
<div class="a " style="left:57px;top:185px;width:5px;height:1px;background:#2a3a8a"></div>
<div class="a " style="left:59px;top:183px;width:1px;height:5px;background:#2a3a8a"></div>
<div class="a " style="left:65px;top:185px;width:5px;height:1px;background:repeating-linear-gradient(90deg,#8a8a8a 0 1px,transparent 1px 2px)"></div>
<svg style="left:70px;top:177px" width="16" height="14"><rect x="0.5" y="1" width="7" height="3" rx="0.5" fill="#9ad2ee" stroke="#5aaed8" stroke-width="0.9"/><rect x="0.5" y="3.5" width="15" height="9.5" fill="url(#fgb)"/><path d="M0.5 3.5 H15.5" stroke="#5ab0dc" stroke-width="1"/><path d="M0.5 3.5 V13" stroke="#4aa6d6" stroke-width="1"/><path d="M1 12.6 H15.5 V4" stroke="url(#fgd)" stroke-width="1.4" fill="none"/></svg>
<div class="t " style="left:91px;top:177px;font-size:12.55px;color:#000">Inštalácie a reinštalácie</div>
<div class="a " style="left:55px;top:199px;width:9px;height:9px;border:1px solid #9a9a9a;border-radius:1px;background:linear-gradient(#fff,#e6e6e6)"></div>
<div class="a " style="left:57px;top:203px;width:5px;height:1px;background:#2a3a8a"></div>
<div class="a " style="left:59px;top:201px;width:1px;height:5px;background:#2a3a8a"></div>
<div class="a " style="left:65px;top:203px;width:5px;height:1px;background:repeating-linear-gradient(90deg,#8a8a8a 0 1px,transparent 1px 2px)"></div>
<svg style="left:70px;top:195px" width="16" height="14"><rect x="0.5" y="1" width="7" height="3" rx="0.5" fill="#9ad2ee" stroke="#5aaed8" stroke-width="0.9"/><rect x="0.5" y="3.5" width="15" height="9.5" fill="url(#fgb)"/><path d="M0.5 3.5 H15.5" stroke="#5ab0dc" stroke-width="1"/><path d="M0.5 3.5 V13" stroke="#4aa6d6" stroke-width="1"/><path d="M1 12.6 H15.5 V4" stroke="url(#fgd)" stroke-width="1.4" fill="none"/></svg>
<div class="t " style="left:91px;top:195px;font-size:12.55px;color:#000">Riadenie vývoja softvéru</div>
<div class="a " style="left:55px;top:217px;width:9px;height:9px;border:1px solid #9a9a9a;border-radius:1px;background:linear-gradient(#fff,#e6e6e6)"></div>
<div class="a " style="left:57px;top:221px;width:5px;height:1px;background:#2a3a8a"></div>
<div class="a " style="left:59px;top:219px;width:1px;height:5px;background:#2a3a8a"></div>
<div class="a " style="left:65px;top:221px;width:5px;height:1px;background:repeating-linear-gradient(90deg,#8a8a8a 0 1px,transparent 1px 2px)"></div>
<svg style="left:70px;top:213px" width="16" height="14"><rect x="0.5" y="1" width="7" height="3" rx="0.5" fill="#9ad2ee" stroke="#5aaed8" stroke-width="0.9"/><rect x="0.5" y="3.5" width="15" height="9.5" fill="url(#fgb)"/><path d="M0.5 3.5 H15.5" stroke="#5ab0dc" stroke-width="1"/><path d="M0.5 3.5 V13" stroke="#4aa6d6" stroke-width="1"/><path d="M1 12.6 H15.5 V4" stroke="url(#fgd)" stroke-width="1.4" fill="none"/></svg>
<div class="t " style="left:91px;top:213px;font-size:12.55px;color:#000">Aplikácie softwarovej podpory QI</div>
<div class="a " style="left:55px;top:235px;width:9px;height:9px;border:1px solid #9a9a9a;border-radius:1px;background:linear-gradient(#fff,#e6e6e6)"></div>
<div class="a " style="left:57px;top:239px;width:5px;height:1px;background:#2a3a8a"></div>
<div class="a " style="left:59px;top:237px;width:1px;height:5px;background:#2a3a8a"></div>
<div class="a " style="left:65px;top:239px;width:5px;height:1px;background:repeating-linear-gradient(90deg,#8a8a8a 0 1px,transparent 1px 2px)"></div>
<svg style="left:70px;top:231px" width="16" height="14"><rect x="0.5" y="1" width="7" height="3" rx="0.5" fill="#9ad2ee" stroke="#5aaed8" stroke-width="0.9"/><rect x="0.5" y="3.5" width="15" height="9.5" fill="url(#fgb)"/><path d="M0.5 3.5 H15.5" stroke="#5ab0dc" stroke-width="1"/><path d="M0.5 3.5 V13" stroke="#4aa6d6" stroke-width="1"/><path d="M1 12.6 H15.5 V4" stroke="url(#fgd)" stroke-width="1.4" fill="none"/></svg>
<div class="t " style="left:91px;top:231px;font-size:12.55px;color:#000">Konfigurácia a správa systému</div>
<div class="a " style="left:55px;top:253px;width:9px;height:9px;border:1px solid #9a9a9a;border-radius:1px;background:linear-gradient(#fff,#e6e6e6)"></div>
<div class="a " style="left:57px;top:257px;width:5px;height:1px;background:#2a3a8a"></div>
<div class="a " style="left:65px;top:257px;width:5px;height:1px;background:repeating-linear-gradient(90deg,#8a8a8a 0 1px,transparent 1px 2px)"></div>
<svg style="left:70px;top:249px" width="16" height="14"><rect x="0.5" y="1" width="7" height="3" rx="0.5" fill="#9ad2ee" stroke="#5aaed8" stroke-width="0.9"/><rect x="0.5" y="3.5" width="15" height="9.5" fill="url(#fgb)"/><path d="M0.5 3.5 H15.5" stroke="#5ab0dc" stroke-width="1"/><path d="M0.5 3.5 V13" stroke="#4aa6d6" stroke-width="1"/><path d="M1 12.6 H15.5 V4" stroke="url(#fgd)" stroke-width="1.4" fill="none"/></svg>
<div class="t " style="left:91px;top:249px;font-size:12.55px;color:#000">APLIKÁCIE</div>
<div class="a " style="left:74px;top:271px;width:9px;height:9px;border:1px solid #9a9a9a;border-radius:1px;background:linear-gradient(#fff,#e6e6e6)"></div>
<div class="a " style="left:76px;top:275px;width:5px;height:1px;background:#2a3a8a"></div>
<div class="a " style="left:78px;top:273px;width:1px;height:5px;background:#2a3a8a"></div>
<div class="a " style="left:84px;top:275px;width:5px;height:1px;background:repeating-linear-gradient(90deg,#8a8a8a 0 1px,transparent 1px 2px)"></div>
<svg style="left:89px;top:267px" width="16" height="14"><rect x="0.5" y="1" width="7" height="3" rx="0.5" fill="#9ad2ee" stroke="#5aaed8" stroke-width="0.9"/><rect x="0.5" y="3.5" width="15" height="9.5" fill="url(#fgb)"/><path d="M0.5 3.5 H15.5" stroke="#5ab0dc" stroke-width="1"/><path d="M0.5 3.5 V13" stroke="#4aa6d6" stroke-width="1"/><path d="M1 12.6 H15.5 V4" stroke="url(#fgd)" stroke-width="1.4" fill="none"/></svg>
<div class="t " style="left:110px;top:267px;font-size:12.55px;color:#000">Manažérske prehľady (BI)</div>
<div class="a " style="left:74px;top:289px;width:9px;height:9px;border:1px solid #9a9a9a;border-radius:1px;background:linear-gradient(#fff,#e6e6e6)"></div>
<div class="a " style="left:76px;top:293px;width:5px;height:1px;background:#2a3a8a"></div>
<div class="a " style="left:78px;top:291px;width:1px;height:5px;background:#2a3a8a"></div>
<div class="a " style="left:84px;top:293px;width:5px;height:1px;background:repeating-linear-gradient(90deg,#8a8a8a 0 1px,transparent 1px 2px)"></div>
<svg style="left:89px;top:285px" width="16" height="14"><rect x="0.5" y="1" width="7" height="3" rx="0.5" fill="#9ad2ee" stroke="#5aaed8" stroke-width="0.9"/><rect x="0.5" y="3.5" width="15" height="9.5" fill="url(#fgb)"/><path d="M0.5 3.5 H15.5" stroke="#5ab0dc" stroke-width="1"/><path d="M0.5 3.5 V13" stroke="#4aa6d6" stroke-width="1"/><path d="M1 12.6 H15.5 V4" stroke="url(#fgd)" stroke-width="1.4" fill="none"/></svg>
<div class="t " style="left:110px;top:285px;font-size:12.55px;color:#000">Financie</div>
<div class="a " style="left:74px;top:307px;width:9px;height:9px;border:1px solid #9a9a9a;border-radius:1px;background:linear-gradient(#fff,#e6e6e6)"></div>
<div class="a " style="left:76px;top:311px;width:5px;height:1px;background:#2a3a8a"></div>
<div class="a " style="left:84px;top:311px;width:5px;height:1px;background:repeating-linear-gradient(90deg,#8a8a8a 0 1px,transparent 1px 2px)"></div>
<svg style="left:89px;top:303px" width="16" height="14"><rect x="0.5" y="1" width="7" height="3" rx="0.5" fill="#9ad2ee" stroke="#5aaed8" stroke-width="0.9"/><rect x="0.5" y="3.5" width="15" height="9.5" fill="url(#fgb)"/><path d="M0.5 3.5 H15.5" stroke="#5ab0dc" stroke-width="1"/><path d="M0.5 3.5 V13" stroke="#4aa6d6" stroke-width="1"/><path d="M1 12.6 H15.5 V4" stroke="url(#fgd)" stroke-width="1.4" fill="none"/></svg>
<div class="t " style="left:110px;top:303px;font-size:12.55px;color:#000">Podvojné účtovníctvo</div>
<div class="a " style="left:93px;top:325px;width:9px;height:9px;border:1px solid #9a9a9a;border-radius:1px;background:linear-gradient(#fff,#e6e6e6)"></div>
<div class="a " style="left:95px;top:329px;width:5px;height:1px;background:#2a3a8a"></div>
<div class="a " style="left:97px;top:327px;width:1px;height:5px;background:#2a3a8a"></div>
<div class="a " style="left:103px;top:329px;width:5px;height:1px;background:repeating-linear-gradient(90deg,#8a8a8a 0 1px,transparent 1px 2px)"></div>
<svg style="left:108px;top:321px" width="16" height="14"><rect x="0.5" y="1" width="7" height="3" rx="0.5" fill="#9ad2ee" stroke="#5aaed8" stroke-width="0.9"/><rect x="0.5" y="3.5" width="15" height="9.5" fill="url(#fgb)"/><path d="M0.5 3.5 H15.5" stroke="#5ab0dc" stroke-width="1"/><path d="M0.5 3.5 V13" stroke="#4aa6d6" stroke-width="1"/><path d="M1 12.6 H15.5 V4" stroke="url(#fgd)" stroke-width="1.4" fill="none"/></svg>
<div class="t " style="left:129px;top:321px;font-size:12.55px;color:#000">Číselníky - Podvojné účtovníctvo</div>
<div class="a " style="left:93px;top:343px;width:9px;height:9px;border:1px solid #9a9a9a;border-radius:1px;background:linear-gradient(#fff,#e6e6e6)"></div>
<div class="a " style="left:95px;top:347px;width:5px;height:1px;background:#2a3a8a"></div>
<div class="a " style="left:97px;top:345px;width:1px;height:5px;background:#2a3a8a"></div>
<div class="a " style="left:103px;top:347px;width:5px;height:1px;background:repeating-linear-gradient(90deg,#8a8a8a 0 1px,transparent 1px 2px)"></div>
<svg style="left:108px;top:339px" width="16" height="14"><rect x="0.5" y="1" width="7" height="3" rx="0.5" fill="#9ad2ee" stroke="#5aaed8" stroke-width="0.9"/><rect x="0.5" y="3.5" width="15" height="9.5" fill="url(#fgb)"/><path d="M0.5 3.5 H15.5" stroke="#5ab0dc" stroke-width="1"/><path d="M0.5 3.5 V13" stroke="#4aa6d6" stroke-width="1"/><path d="M1 12.6 H15.5 V4" stroke="url(#fgd)" stroke-width="1.4" fill="none"/></svg>
<div class="t " style="left:129px;top:339px;font-size:12.55px;color:#000">Pomocný konsolidačný prehľad</div>
<div class="a " style="left:93px;top:361px;width:9px;height:9px;border:1px solid #9a9a9a;border-radius:1px;background:linear-gradient(#fff,#e6e6e6)"></div>
<div class="a " style="left:95px;top:365px;width:5px;height:1px;background:#2a3a8a"></div>
<div class="a " style="left:103px;top:365px;width:5px;height:1px;background:repeating-linear-gradient(90deg,#8a8a8a 0 1px,transparent 1px 2px)"></div>
<svg style="left:108px;top:357px" width="16" height="14"><rect x="0.5" y="1" width="7" height="3" rx="0.5" fill="#9ad2ee" stroke="#5aaed8" stroke-width="0.9"/><rect x="0.5" y="3.5" width="15" height="9.5" fill="url(#fgb)"/><path d="M0.5 3.5 H15.5" stroke="#5ab0dc" stroke-width="1"/><path d="M0.5 3.5 V13" stroke="#4aa6d6" stroke-width="1"/><path d="M1 12.6 H15.5 V4" stroke="url(#fgd)" stroke-width="1.4" fill="none"/></svg>
<div class="t " style="left:129px;top:357px;font-size:12.55px;color:#000">Účtovné operácie</div>
<div class="a " style="left:117px;top:383px;width:12px;height:1px;background:repeating-linear-gradient(90deg,#8a8a8a 0 1px,transparent 1px 2px)"></div>
<svg style="left:131px;top:376px" width="8" height="12"><path d="M0.5 0.5 L7 6 L0.5 11.5Z" fill="#2a6a8a"/><path d="M0.5 0.5 L7 6 L0.5 6Z" fill="#3a8ab0"/></svg>
<div class="t " style="left:148px;top:375px;font-size:12.55px;color:#000">Žiadosti o zaúčtovanie</div>
<div class="a " style="left:117px;top:401px;width:12px;height:1px;background:repeating-linear-gradient(90deg,#8a8a8a 0 1px,transparent 1px 2px)"></div>
<svg style="left:131px;top:394px" width="8" height="12"><path d="M0.5 0.5 L7 6 L0.5 11.5Z" fill="#2a6a8a"/><path d="M0.5 0.5 L7 6 L0.5 6Z" fill="#3a8ab0"/></svg>
<div class="t " style="left:148px;top:393px;font-size:12.55px;color:#000">Účtovný denník</div>
<div class="a " style="left:112px;top:415px;width:9px;height:9px;border:1px solid #9a9a9a;border-radius:1px;background:linear-gradient(#fff,#e6e6e6)"></div>
<div class="a " style="left:114px;top:419px;width:5px;height:1px;background:#2a3a8a"></div>
<div class="a " style="left:116px;top:417px;width:1px;height:5px;background:#2a3a8a"></div>
<div class="a " style="left:122px;top:419px;width:5px;height:1px;background:repeating-linear-gradient(90deg,#8a8a8a 0 1px,transparent 1px 2px)"></div>
<svg style="left:127px;top:411px" width="16" height="14"><rect x="0.5" y="1" width="7" height="3" rx="0.5" fill="#9ad2ee" stroke="#5aaed8" stroke-width="0.9"/><rect x="0.5" y="3.5" width="15" height="9.5" fill="url(#fgb)"/><path d="M0.5 3.5 H15.5" stroke="#5ab0dc" stroke-width="1"/><path d="M0.5 3.5 V13" stroke="#4aa6d6" stroke-width="1"/><path d="M1 12.6 H15.5 V4" stroke="url(#fgd)" stroke-width="1.4" fill="none"/></svg>
<div class="t " style="left:148px;top:411px;font-size:12.55px;color:#000">Doklady bez účtovných položiek</div>
<div class="a " style="left:117px;top:437px;width:12px;height:1px;background:repeating-linear-gradient(90deg,#8a8a8a 0 1px,transparent 1px 2px)"></div>
<svg style="left:131px;top:430px" width="8" height="12"><path d="M0.5 0.5 L7 6 L0.5 11.5Z" fill="#2a6a8a"/><path d="M0.5 0.5 L7 6 L0.5 6Z" fill="#3a8ab0"/></svg>
<div class="t " style="left:148px;top:429px;font-size:12.55px;color:#000">Výpis účtu</div>
<div class="a " style="left:117px;top:455px;width:12px;height:1px;background:repeating-linear-gradient(90deg,#8a8a8a 0 1px,transparent 1px 2px)"></div>
<svg style="left:131px;top:448px" width="8" height="12"><path d="M0.5 0.5 L7 6 L0.5 11.5Z" fill="#2a6a8a"/><path d="M0.5 0.5 L7 6 L0.5 6Z" fill="#3a8ab0"/></svg>
<div class="t " style="left:148px;top:447px;font-size:12.55px;color:#000">Výpis za rozsah účtov</div>
<div class="a " style="left:117px;top:473px;width:12px;height:1px;background:repeating-linear-gradient(90deg,#8a8a8a 0 1px,transparent 1px 2px)"></div>
<svg style="left:131px;top:466px" width="8" height="12"><path d="M0.5 0.5 L7 6 L0.5 11.5Z" fill="#2a6a8a"/><path d="M0.5 0.5 L7 6 L0.5 6Z" fill="#3a8ab0"/></svg>
<div class="t " style="left:148px;top:465px;font-size:12.55px;color:#000">Obraty triedy, skupiny, účtu</div>
<div class="a " style="left:117px;top:491px;width:12px;height:1px;background:repeating-linear-gradient(90deg,#8a8a8a 0 1px,transparent 1px 2px)"></div>
<svg style="left:131px;top:484px" width="8" height="12"><path d="M0.5 0.5 L7 6 L0.5 11.5Z" fill="#2a6a8a"/><path d="M0.5 0.5 L7 6 L0.5 6Z" fill="#3a8ab0"/></svg>
<div class="t " style="left:148px;top:483px;font-size:12.55px;color:#000">Saldokontná kniha - položková</div>
<div class="a " style="left:117px;top:509px;width:12px;height:1px;background:repeating-linear-gradient(90deg,#8a8a8a 0 1px,transparent 1px 2px)"></div>
<svg style="left:131px;top:502px" width="8" height="12"><path d="M0.5 0.5 L7 6 L0.5 11.5Z" fill="#2a6a8a"/><path d="M0.5 0.5 L7 6 L0.5 6Z" fill="#3a8ab0"/></svg>
<div class="t " style="left:148px;top:501px;font-size:12.55px;color:#000">Saldokontná kniha - súčtová</div>
<div class="a " style="left:117px;top:527px;width:12px;height:1px;background:repeating-linear-gradient(90deg,#8a8a8a 0 1px,transparent 1px 2px)"></div>
<svg style="left:131px;top:520px" width="8" height="12"><path d="M0.5 0.5 L7 6 L0.5 11.5Z" fill="#2a6a8a"/><path d="M0.5 0.5 L7 6 L0.5 6Z" fill="#3a8ab0"/></svg>
<div class="t " style="left:148px;top:519px;font-size:12.55px;color:#000">Preúčtovanie nákladov</div>
<div class="a " style="left:117px;top:545px;width:12px;height:1px;background:repeating-linear-gradient(90deg,#8a8a8a 0 1px,transparent 1px 2px)"></div>
<svg style="left:131px;top:538px" width="8" height="12"><path d="M0.5 0.5 L7 6 L0.5 11.5Z" fill="#2a6a8a"/><path d="M0.5 0.5 L7 6 L0.5 6Z" fill="#3a8ab0"/></svg>
<div class="t " style="left:148px;top:537px;font-size:12.55px;color:#000">Rozpúšťanie nákladov</div>
<div class="a " style="left:93px;top:559px;width:9px;height:9px;border:1px solid #9a9a9a;border-radius:1px;background:linear-gradient(#fff,#e6e6e6)"></div>
<div class="a " style="left:95px;top:563px;width:5px;height:1px;background:#2a3a8a"></div>
<div class="a " style="left:97px;top:561px;width:1px;height:5px;background:#2a3a8a"></div>
<div class="a " style="left:103px;top:563px;width:5px;height:1px;background:repeating-linear-gradient(90deg,#8a8a8a 0 1px,transparent 1px 2px)"></div>
<svg style="left:108px;top:555px" width="16" height="14"><rect x="0.5" y="1" width="7" height="3" rx="0.5" fill="#9ad2ee" stroke="#5aaed8" stroke-width="0.9"/><rect x="0.5" y="3.5" width="15" height="9.5" fill="url(#fgb)"/><path d="M0.5 3.5 H15.5" stroke="#5ab0dc" stroke-width="1"/><path d="M0.5 3.5 V13" stroke="#4aa6d6" stroke-width="1"/><path d="M1 12.6 H15.5 V4" stroke="url(#fgd)" stroke-width="1.4" fill="none"/></svg>
<div class="t " style="left:129px;top:555px;font-size:12.55px;color:#000">Účtovné zostavy (uzávierky)</div>
<div class="a " style="left:93px;top:577px;width:9px;height:9px;border:1px solid #9a9a9a;border-radius:1px;background:linear-gradient(#fff,#e6e6e6)"></div>
<div class="a " style="left:95px;top:581px;width:5px;height:1px;background:#2a3a8a"></div>
<div class="a " style="left:97px;top:579px;width:1px;height:5px;background:#2a3a8a"></div>
<div class="a " style="left:103px;top:581px;width:5px;height:1px;background:repeating-linear-gradient(90deg,#8a8a8a 0 1px,transparent 1px 2px)"></div>
<svg style="left:108px;top:573px" width="16" height="14"><rect x="0.5" y="1" width="7" height="3" rx="0.5" fill="#9ad2ee" stroke="#5aaed8" stroke-width="0.9"/><rect x="0.5" y="3.5" width="15" height="9.5" fill="url(#fgb)"/><path d="M0.5 3.5 H15.5" stroke="#5ab0dc" stroke-width="1"/><path d="M0.5 3.5 V13" stroke="#4aa6d6" stroke-width="1"/><path d="M1 12.6 H15.5 V4" stroke="url(#fgd)" stroke-width="1.4" fill="none"/></svg>
<div class="t " style="left:129px;top:573px;font-size:12.55px;color:#000">Interné doklady</div>
<div class="a " style="left:93px;top:595px;width:9px;height:9px;border:1px solid #9a9a9a;border-radius:1px;background:linear-gradient(#fff,#e6e6e6)"></div>
<div class="a " style="left:95px;top:599px;width:5px;height:1px;background:#2a3a8a"></div>
<div class="a " style="left:97px;top:597px;width:1px;height:5px;background:#2a3a8a"></div>
<div class="a " style="left:103px;top:599px;width:5px;height:1px;background:repeating-linear-gradient(90deg,#8a8a8a 0 1px,transparent 1px 2px)"></div>
<svg style="left:108px;top:591px" width="16" height="14"><rect x="0.5" y="1" width="7" height="3" rx="0.5" fill="#9ad2ee" stroke="#5aaed8" stroke-width="0.9"/><rect x="0.5" y="3.5" width="15" height="9.5" fill="url(#fgb)"/><path d="M0.5 3.5 H15.5" stroke="#5ab0dc" stroke-width="1"/><path d="M0.5 3.5 V13" stroke="#4aa6d6" stroke-width="1"/><path d="M1 12.6 H15.5 V4" stroke="url(#fgd)" stroke-width="1.4" fill="none"/></svg>
<div class="t " style="left:129px;top:591px;font-size:12.55px;color:#000">Vnútropodnikové účtovníctvo</div>
<div class="a " style="left:93px;top:613px;width:9px;height:9px;border:1px solid #9a9a9a;border-radius:1px;background:linear-gradient(#fff,#e6e6e6)"></div>
<div class="a " style="left:95px;top:617px;width:5px;height:1px;background:#2a3a8a"></div>
<div class="a " style="left:97px;top:615px;width:1px;height:5px;background:#2a3a8a"></div>
<div class="a " style="left:103px;top:617px;width:5px;height:1px;background:repeating-linear-gradient(90deg,#8a8a8a 0 1px,transparent 1px 2px)"></div>
<svg style="left:108px;top:609px" width="16" height="14"><rect x="0.5" y="1" width="7" height="3" rx="0.5" fill="#9ad2ee" stroke="#5aaed8" stroke-width="0.9"/><rect x="0.5" y="3.5" width="15" height="9.5" fill="url(#fgb)"/><path d="M0.5 3.5 H15.5" stroke="#5ab0dc" stroke-width="1"/><path d="M0.5 3.5 V13" stroke="#4aa6d6" stroke-width="1"/><path d="M1 12.6 H15.5 V4" stroke="url(#fgd)" stroke-width="1.4" fill="none"/></svg>
<div class="t " style="left:129px;top:609px;font-size:12.55px;color:#000">Predkontácie</div>
<div class="a " style="left:93px;top:631px;width:9px;height:9px;border:1px solid #9a9a9a;border-radius:1px;background:linear-gradient(#fff,#e6e6e6)"></div>
<div class="a " style="left:95px;top:635px;width:5px;height:1px;background:#2a3a8a"></div>
<div class="a " style="left:97px;top:633px;width:1px;height:5px;background:#2a3a8a"></div>
<div class="a " style="left:103px;top:635px;width:5px;height:1px;background:repeating-linear-gradient(90deg,#8a8a8a 0 1px,transparent 1px 2px)"></div>
<svg style="left:108px;top:627px" width="16" height="14"><rect x="0.5" y="1" width="7" height="3" rx="0.5" fill="#9ad2ee" stroke="#5aaed8" stroke-width="0.9"/><rect x="0.5" y="3.5" width="15" height="9.5" fill="url(#fgb)"/><path d="M0.5 3.5 H15.5" stroke="#5ab0dc" stroke-width="1"/><path d="M0.5 3.5 V13" stroke="#4aa6d6" stroke-width="1"/><path d="M1 12.6 H15.5 V4" stroke="url(#fgd)" stroke-width="1.4" fill="none"/></svg>
<div class="t " style="left:129px;top:627px;font-size:12.55px;color:#000">Podporné funkcie účtovníctva</div>
<div class="a " style="left:93px;top:649px;width:9px;height:9px;border:1px solid #9a9a9a;border-radius:1px;background:linear-gradient(#fff,#e6e6e6)"></div>
<div class="a " style="left:95px;top:653px;width:5px;height:1px;background:#2a3a8a"></div>
<div class="a " style="left:97px;top:651px;width:1px;height:5px;background:#2a3a8a"></div>
<div class="a " style="left:103px;top:653px;width:5px;height:1px;background:repeating-linear-gradient(90deg,#8a8a8a 0 1px,transparent 1px 2px)"></div>
<svg style="left:108px;top:645px" width="16" height="14"><rect x="0.5" y="1" width="7" height="3" rx="0.5" fill="#9ad2ee" stroke="#5aaed8" stroke-width="0.9"/><rect x="0.5" y="3.5" width="15" height="9.5" fill="url(#fgb)"/><path d="M0.5 3.5 H15.5" stroke="#5ab0dc" stroke-width="1"/><path d="M0.5 3.5 V13" stroke="#4aa6d6" stroke-width="1"/><path d="M1 12.6 H15.5 V4" stroke="url(#fgd)" stroke-width="1.4" fill="none"/></svg>
<div class="t " style="left:129px;top:645px;font-size:12.55px;color:#000">Príspevkové organizácie</div>
<div class="a " style="left:74px;top:667px;width:9px;height:9px;border:1px solid #9a9a9a;border-radius:1px;background:linear-gradient(#fff,#e6e6e6)"></div>
<div class="a " style="left:76px;top:671px;width:5px;height:1px;background:#2a3a8a"></div>
<div class="a " style="left:78px;top:669px;width:1px;height:5px;background:#2a3a8a"></div>
<div class="a " style="left:84px;top:671px;width:5px;height:1px;background:repeating-linear-gradient(90deg,#8a8a8a 0 1px,transparent 1px 2px)"></div>
<svg style="left:89px;top:663px" width="16" height="14"><rect x="0.5" y="1" width="7" height="3" rx="0.5" fill="#9ad2ee" stroke="#5aaed8" stroke-width="0.9"/><rect x="0.5" y="3.5" width="15" height="9.5" fill="url(#fgb)"/><path d="M0.5 3.5 H15.5" stroke="#5ab0dc" stroke-width="1"/><path d="M0.5 3.5 V13" stroke="#4aa6d6" stroke-width="1"/><path d="M1 12.6 H15.5 V4" stroke="url(#fgd)" stroke-width="1.4" fill="none"/></svg>
<div class="t " style="left:110px;top:663px;font-size:12.55px;color:#000">Sklady</div>
<div class="a " style="left:74px;top:685px;width:9px;height:9px;border:1px solid #9a9a9a;border-radius:1px;background:linear-gradient(#fff,#e6e6e6)"></div>
<div class="a " style="left:76px;top:689px;width:5px;height:1px;background:#2a3a8a"></div>
<div class="a " style="left:78px;top:687px;width:1px;height:5px;background:#2a3a8a"></div>
<div class="a " style="left:84px;top:689px;width:5px;height:1px;background:repeating-linear-gradient(90deg,#8a8a8a 0 1px,transparent 1px 2px)"></div>
<svg style="left:89px;top:681px" width="16" height="14"><rect x="0.5" y="1" width="7" height="3" rx="0.5" fill="#9ad2ee" stroke="#5aaed8" stroke-width="0.9"/><rect x="0.5" y="3.5" width="15" height="9.5" fill="url(#fgb)"/><path d="M0.5 3.5 H15.5" stroke="#5ab0dc" stroke-width="1"/><path d="M0.5 3.5 V13" stroke="#4aa6d6" stroke-width="1"/><path d="M1 12.6 H15.5 V4" stroke="url(#fgd)" stroke-width="1.4" fill="none"/></svg>
<div class="t " style="left:110px;top:681px;font-size:12.55px;color:#000">Predaj a nákup</div>
<div class="a " style="left:74px;top:703px;width:9px;height:9px;border:1px solid #9a9a9a;border-radius:1px;background:linear-gradient(#fff,#e6e6e6)"></div>
<div class="a " style="left:76px;top:707px;width:5px;height:1px;background:#2a3a8a"></div>
<div class="a " style="left:78px;top:705px;width:1px;height:5px;background:#2a3a8a"></div>
<div class="a " style="left:84px;top:707px;width:5px;height:1px;background:repeating-linear-gradient(90deg,#8a8a8a 0 1px,transparent 1px 2px)"></div>
<svg style="left:89px;top:699px" width="16" height="14"><rect x="0.5" y="1" width="7" height="3" rx="0.5" fill="#9ad2ee" stroke="#5aaed8" stroke-width="0.9"/><rect x="0.5" y="3.5" width="15" height="9.5" fill="url(#fgb)"/><path d="M0.5 3.5 H15.5" stroke="#5ab0dc" stroke-width="1"/><path d="M0.5 3.5 V13" stroke="#4aa6d6" stroke-width="1"/><path d="M1 12.6 H15.5 V4" stroke="url(#fgd)" stroke-width="1.4" fill="none"/></svg>
<div class="t " style="left:110px;top:699px;font-size:12.55px;color:#000">Vodárenstvo</div>
<div class="a " style="left:74px;top:721px;width:9px;height:9px;border:1px solid #9a9a9a;border-radius:1px;background:linear-gradient(#fff,#e6e6e6)"></div>
<div class="a " style="left:76px;top:725px;width:5px;height:1px;background:#2a3a8a"></div>
<div class="a " style="left:78px;top:723px;width:1px;height:5px;background:#2a3a8a"></div>
<div class="a " style="left:84px;top:725px;width:5px;height:1px;background:repeating-linear-gradient(90deg,#8a8a8a 0 1px,transparent 1px 2px)"></div>
<svg style="left:89px;top:717px" width="16" height="14"><rect x="0.5" y="1" width="7" height="3" rx="0.5" fill="#9ad2ee" stroke="#5aaed8" stroke-width="0.9"/><rect x="0.5" y="3.5" width="15" height="9.5" fill="url(#fgb)"/><path d="M0.5 3.5 H15.5" stroke="#5ab0dc" stroke-width="1"/><path d="M0.5 3.5 V13" stroke="#4aa6d6" stroke-width="1"/><path d="M1 12.6 H15.5 V4" stroke="url(#fgd)" stroke-width="1.4" fill="none"/></svg>
<div class="t " style="left:110px;top:717px;font-size:12.55px;color:#000">Správa priestorov (nové)</div>
<div class="a " style="left:74px;top:739px;width:9px;height:9px;border:1px solid #9a9a9a;border-radius:1px;background:linear-gradient(#fff,#e6e6e6)"></div>
<div class="a " style="left:76px;top:743px;width:5px;height:1px;background:#2a3a8a"></div>
<div class="a " style="left:78px;top:741px;width:1px;height:5px;background:#2a3a8a"></div>
<div class="a " style="left:84px;top:743px;width:5px;height:1px;background:repeating-linear-gradient(90deg,#8a8a8a 0 1px,transparent 1px 2px)"></div>
<svg style="left:89px;top:735px" width="16" height="14"><rect x="0.5" y="1" width="7" height="3" rx="0.5" fill="#9ad2ee" stroke="#5aaed8" stroke-width="0.9"/><rect x="0.5" y="3.5" width="15" height="9.5" fill="url(#fgb)"/><path d="M0.5 3.5 H15.5" stroke="#5ab0dc" stroke-width="1"/><path d="M0.5 3.5 V13" stroke="#4aa6d6" stroke-width="1"/><path d="M1 12.6 H15.5 V4" stroke="url(#fgd)" stroke-width="1.4" fill="none"/></svg>
<div class="t " style="left:110px;top:735px;font-size:12.55px;color:#000">QI Mobile</div>
<div class="a " style="left:74px;top:757px;width:9px;height:9px;border:1px solid #9a9a9a;border-radius:1px;background:linear-gradient(#fff,#e6e6e6)"></div>
<div class="a " style="left:76px;top:761px;width:5px;height:1px;background:#2a3a8a"></div>
<div class="a " style="left:78px;top:759px;width:1px;height:5px;background:#2a3a8a"></div>
<div class="a " style="left:84px;top:761px;width:5px;height:1px;background:repeating-linear-gradient(90deg,#8a8a8a 0 1px,transparent 1px 2px)"></div>
<svg style="left:89px;top:753px" width="16" height="14"><rect x="0.5" y="1" width="7" height="3" rx="0.5" fill="#9ad2ee" stroke="#5aaed8" stroke-width="0.9"/><rect x="0.5" y="3.5" width="15" height="9.5" fill="url(#fgb)"/><path d="M0.5 3.5 H15.5" stroke="#5ab0dc" stroke-width="1"/><path d="M0.5 3.5 V13" stroke="#4aa6d6" stroke-width="1"/><path d="M1 12.6 H15.5 V4" stroke="url(#fgd)" stroke-width="1.4" fill="none"/></svg>
<div class="t " style="left:110px;top:753px;font-size:12.55px;color:#000">Evidencia inštalácií pre partnerov</div>
<div class="a " style="left:74px;top:775px;width:9px;height:9px;border:1px solid #9a9a9a;border-radius:1px;background:linear-gradient(#fff,#e6e6e6)"></div>
<div class="a " style="left:76px;top:779px;width:5px;height:1px;background:#2a3a8a"></div>
<div class="a " style="left:78px;top:777px;width:1px;height:5px;background:#2a3a8a"></div>
<div class="a " style="left:84px;top:779px;width:5px;height:1px;background:repeating-linear-gradient(90deg,#8a8a8a 0 1px,transparent 1px 2px)"></div>
<svg style="left:89px;top:771px" width="16" height="14"><rect x="0.5" y="1" width="7" height="3" rx="0.5" fill="#9ad2ee" stroke="#5aaed8" stroke-width="0.9"/><rect x="0.5" y="3.5" width="15" height="9.5" fill="url(#fgb)"/><path d="M0.5 3.5 H15.5" stroke="#5ab0dc" stroke-width="1"/><path d="M0.5 3.5 V13" stroke="#4aa6d6" stroke-width="1"/><path d="M1 12.6 H15.5 V4" stroke="url(#fgd)" stroke-width="1.4" fill="none"/></svg>
<div class="t " style="left:110px;top:771px;font-size:12.55px;color:#000">Spoločné číselníky aplikácií</div>
<div class="a " style="left:74px;top:793px;width:9px;height:9px;border:1px solid #9a9a9a;border-radius:1px;background:linear-gradient(#fff,#e6e6e6)"></div>
<div class="a " style="left:76px;top:797px;width:5px;height:1px;background:#2a3a8a"></div>
<div class="a " style="left:78px;top:795px;width:1px;height:5px;background:#2a3a8a"></div>
<div class="a " style="left:84px;top:797px;width:5px;height:1px;background:repeating-linear-gradient(90deg,#8a8a8a 0 1px,transparent 1px 2px)"></div>
<svg style="left:89px;top:789px" width="16" height="14"><rect x="0.5" y="1" width="7" height="3" rx="0.5" fill="#9ad2ee" stroke="#5aaed8" stroke-width="0.9"/><rect x="0.5" y="3.5" width="15" height="9.5" fill="url(#fgb)"/><path d="M0.5 3.5 H15.5" stroke="#5ab0dc" stroke-width="1"/><path d="M0.5 3.5 V13" stroke="#4aa6d6" stroke-width="1"/><path d="M1 12.6 H15.5 V4" stroke="url(#fgd)" stroke-width="1.4" fill="none"/></svg>
<div class="t " style="left:110px;top:789px;font-size:12.55px;color:#000">Obchodní partneri</div>
<div class="a " style="left:74px;top:811px;width:9px;height:9px;border:1px solid #9a9a9a;border-radius:1px;background:linear-gradient(#fff,#e6e6e6)"></div>
<div class="a " style="left:76px;top:815px;width:5px;height:1px;background:#2a3a8a"></div>
<div class="a " style="left:78px;top:813px;width:1px;height:5px;background:#2a3a8a"></div>
<div class="a " style="left:84px;top:815px;width:5px;height:1px;background:repeating-linear-gradient(90deg,#8a8a8a 0 1px,transparent 1px 2px)"></div>
<svg style="left:89px;top:807px" width="16" height="14"><rect x="0.5" y="1" width="7" height="3" rx="0.5" fill="#9ad2ee" stroke="#5aaed8" stroke-width="0.9"/><rect x="0.5" y="3.5" width="15" height="9.5" fill="url(#fgb)"/><path d="M0.5 3.5 H15.5" stroke="#5ab0dc" stroke-width="1"/><path d="M0.5 3.5 V13" stroke="#4aa6d6" stroke-width="1"/><path d="M1 12.6 H15.5 V4" stroke="url(#fgd)" stroke-width="1.4" fill="none"/></svg>
<div class="t " style="left:110px;top:807px;font-size:12.55px;color:#000">Organizácia a riadenie</div>
<div class="a " style="left:74px;top:829px;width:9px;height:9px;border:1px solid #9a9a9a;border-radius:1px;background:linear-gradient(#fff,#e6e6e6)"></div>
<div class="a " style="left:76px;top:833px;width:5px;height:1px;background:#2a3a8a"></div>
<div class="a " style="left:78px;top:831px;width:1px;height:5px;background:#2a3a8a"></div>
<div class="a " style="left:84px;top:833px;width:5px;height:1px;background:repeating-linear-gradient(90deg,#8a8a8a 0 1px,transparent 1px 2px)"></div>
<svg style="left:89px;top:825px" width="16" height="14"><rect x="0.5" y="1" width="7" height="3" rx="0.5" fill="#9ad2ee" stroke="#5aaed8" stroke-width="0.9"/><rect x="0.5" y="3.5" width="15" height="9.5" fill="url(#fgb)"/><path d="M0.5 3.5 H15.5" stroke="#5ab0dc" stroke-width="1"/><path d="M0.5 3.5 V13" stroke="#4aa6d6" stroke-width="1"/><path d="M1 12.6 H15.5 V4" stroke="url(#fgd)" stroke-width="1.4" fill="none"/></svg>
<div class="t " style="left:110px;top:825px;font-size:12.55px;color:#000">Riadenie vzťahov so zákazníkmi (CRM)</div>
<div class="a " style="left:74px;top:847px;width:9px;height:9px;border:1px solid #9a9a9a;border-radius:1px;background:linear-gradient(#fff,#e6e6e6)"></div>
<div class="a " style="left:76px;top:851px;width:5px;height:1px;background:#2a3a8a"></div>
<div class="a " style="left:78px;top:849px;width:1px;height:5px;background:#2a3a8a"></div>
<div class="a " style="left:84px;top:851px;width:5px;height:1px;background:repeating-linear-gradient(90deg,#8a8a8a 0 1px,transparent 1px 2px)"></div>
<svg style="left:89px;top:843px" width="16" height="14"><rect x="0.5" y="1" width="7" height="3" rx="0.5" fill="#9ad2ee" stroke="#5aaed8" stroke-width="0.9"/><rect x="0.5" y="3.5" width="15" height="9.5" fill="url(#fgb)"/><path d="M0.5 3.5 H15.5" stroke="#5ab0dc" stroke-width="1"/><path d="M0.5 3.5 V13" stroke="#4aa6d6" stroke-width="1"/><path d="M1 12.6 H15.5 V4" stroke="url(#fgd)" stroke-width="1.4" fill="none"/></svg>
<div class="t " style="left:110px;top:843px;font-size:12.55px;color:#000">Komunikácia s partnermi</div>
<div class="a " style="left:74px;top:865px;width:9px;height:9px;border:1px solid #9a9a9a;border-radius:1px;background:linear-gradient(#fff,#e6e6e6)"></div>
<div class="a " style="left:76px;top:869px;width:5px;height:1px;background:#2a3a8a"></div>
<div class="a " style="left:78px;top:867px;width:1px;height:5px;background:#2a3a8a"></div>
<div class="a " style="left:84px;top:869px;width:5px;height:1px;background:repeating-linear-gradient(90deg,#8a8a8a 0 1px,transparent 1px 2px)"></div>
<svg style="left:89px;top:861px" width="16" height="14"><rect x="0.5" y="1" width="7" height="3" rx="0.5" fill="#9ad2ee" stroke="#5aaed8" stroke-width="0.9"/><rect x="0.5" y="3.5" width="15" height="9.5" fill="url(#fgb)"/><path d="M0.5 3.5 H15.5" stroke="#5ab0dc" stroke-width="1"/><path d="M0.5 3.5 V13" stroke="#4aa6d6" stroke-width="1"/><path d="M1 12.6 H15.5 V4" stroke="url(#fgd)" stroke-width="1.4" fill="none"/></svg>
<div class="t " style="left:110px;top:861px;font-size:12.55px;color:#000">Publikačný systém</div>
<div class="a " style="left:74px;top:883px;width:9px;height:9px;border:1px solid #9a9a9a;border-radius:1px;background:linear-gradient(#fff,#e6e6e6)"></div>
<div class="a " style="left:76px;top:887px;width:5px;height:1px;background:#2a3a8a"></div>
<div class="a " style="left:78px;top:885px;width:1px;height:5px;background:#2a3a8a"></div>
<div class="a " style="left:84px;top:887px;width:5px;height:1px;background:repeating-linear-gradient(90deg,#8a8a8a 0 1px,transparent 1px 2px)"></div>
<svg style="left:89px;top:879px" width="16" height="14"><rect x="0.5" y="1" width="7" height="3" rx="0.5" fill="#9ad2ee" stroke="#5aaed8" stroke-width="0.9"/><rect x="0.5" y="3.5" width="15" height="9.5" fill="url(#fgb)"/><path d="M0.5 3.5 H15.5" stroke="#5ab0dc" stroke-width="1"/><path d="M0.5 3.5 V13" stroke="#4aa6d6" stroke-width="1"/><path d="M1 12.6 H15.5 V4" stroke="url(#fgd)" stroke-width="1.4" fill="none"/></svg>
<div class="t " style="left:110px;top:879px;font-size:12.55px;color:#000">Doprava</div>
<div class="a " style="left:74px;top:901px;width:9px;height:9px;border:1px solid #9a9a9a;border-radius:1px;background:linear-gradient(#fff,#e6e6e6)"></div>
<div class="a " style="left:76px;top:905px;width:5px;height:1px;background:#2a3a8a"></div>
<div class="a " style="left:78px;top:903px;width:1px;height:5px;background:#2a3a8a"></div>
<div class="a " style="left:84px;top:905px;width:5px;height:1px;background:repeating-linear-gradient(90deg,#8a8a8a 0 1px,transparent 1px 2px)"></div>
<svg style="left:89px;top:897px" width="16" height="14"><rect x="0.5" y="1" width="7" height="3" rx="0.5" fill="#9ad2ee" stroke="#5aaed8" stroke-width="0.9"/><rect x="0.5" y="3.5" width="15" height="9.5" fill="url(#fgb)"/><path d="M0.5 3.5 H15.5" stroke="#5ab0dc" stroke-width="1"/><path d="M0.5 3.5 V13" stroke="#4aa6d6" stroke-width="1"/><path d="M1 12.6 H15.5 V4" stroke="url(#fgd)" stroke-width="1.4" fill="none"/></svg>
<div class="t " style="left:110px;top:897px;font-size:12.55px;color:#000">Personalistika</div>
<div class="a " style="left:74px;top:919px;width:9px;height:9px;border:1px solid #9a9a9a;border-radius:1px;background:linear-gradient(#fff,#e6e6e6)"></div>
<div class="a " style="left:76px;top:923px;width:5px;height:1px;background:#2a3a8a"></div>
<div class="a " style="left:78px;top:921px;width:1px;height:5px;background:#2a3a8a"></div>
<div class="a " style="left:84px;top:923px;width:5px;height:1px;background:repeating-linear-gradient(90deg,#8a8a8a 0 1px,transparent 1px 2px)"></div>
<svg style="left:89px;top:915px" width="16" height="14"><rect x="0.5" y="1" width="7" height="3" rx="0.5" fill="#9ad2ee" stroke="#5aaed8" stroke-width="0.9"/><rect x="0.5" y="3.5" width="15" height="9.5" fill="url(#fgb)"/><path d="M0.5 3.5 H15.5" stroke="#5ab0dc" stroke-width="1"/><path d="M0.5 3.5 V13" stroke="#4aa6d6" stroke-width="1"/><path d="M1 12.6 H15.5 V4" stroke="url(#fgd)" stroke-width="1.4" fill="none"/></svg>
<div class="t " style="left:110px;top:915px;font-size:12.55px;color:#000">QI Portály</div>
<div class="a " style="left:74px;top:937px;width:9px;height:9px;border:1px solid #9a9a9a;border-radius:1px;background:linear-gradient(#fff,#e6e6e6)"></div>
<div class="a " style="left:76px;top:941px;width:5px;height:1px;background:#2a3a8a"></div>
<div class="a " style="left:78px;top:939px;width:1px;height:5px;background:#2a3a8a"></div>
<div class="a " style="left:84px;top:941px;width:5px;height:1px;background:repeating-linear-gradient(90deg,#8a8a8a 0 1px,transparent 1px 2px)"></div>
<svg style="left:89px;top:933px" width="16" height="14"><rect x="0.5" y="1" width="7" height="3" rx="0.5" fill="#9ad2ee" stroke="#5aaed8" stroke-width="0.9"/><rect x="0.5" y="3.5" width="15" height="9.5" fill="url(#fgb)"/><path d="M0.5 3.5 H15.5" stroke="#5ab0dc" stroke-width="1"/><path d="M0.5 3.5 V13" stroke="#4aa6d6" stroke-width="1"/><path d="M1 12.6 H15.5 V4" stroke="url(#fgd)" stroke-width="1.4" fill="none"/></svg>
<div class="t " style="left:110px;top:933px;font-size:12.55px;color:#000">Mzdy</div>
<div class="a " style="left:74px;top:955px;width:9px;height:9px;border:1px solid #9a9a9a;border-radius:1px;background:linear-gradient(#fff,#e6e6e6)"></div>
<div class="a " style="left:76px;top:959px;width:5px;height:1px;background:#2a3a8a"></div>
<div class="a " style="left:78px;top:957px;width:1px;height:5px;background:#2a3a8a"></div>
<div class="a " style="left:84px;top:959px;width:5px;height:1px;background:repeating-linear-gradient(90deg,#8a8a8a 0 1px,transparent 1px 2px)"></div>
<svg style="left:89px;top:951px" width="16" height="14"><rect x="0.5" y="1" width="7" height="3" rx="0.5" fill="#9ad2ee" stroke="#5aaed8" stroke-width="0.9"/><rect x="0.5" y="3.5" width="15" height="9.5" fill="url(#fgb)"/><path d="M0.5 3.5 H15.5" stroke="#5ab0dc" stroke-width="1"/><path d="M0.5 3.5 V13" stroke="#4aa6d6" stroke-width="1"/><path d="M1 12.6 H15.5 V4" stroke="url(#fgd)" stroke-width="1.4" fill="none"/></svg>
<div class="t " style="left:110px;top:951px;font-size:12.55px;color:#000">Majetok</div>
<div class="a " style="left:74px;top:973px;width:9px;height:9px;border:1px solid #9a9a9a;border-radius:1px;background:linear-gradient(#fff,#e6e6e6)"></div>
<div class="a " style="left:76px;top:977px;width:5px;height:1px;background:#2a3a8a"></div>
<div class="a " style="left:78px;top:975px;width:1px;height:5px;background:#2a3a8a"></div>
<div class="a " style="left:84px;top:977px;width:5px;height:1px;background:repeating-linear-gradient(90deg,#8a8a8a 0 1px,transparent 1px 2px)"></div>
<svg style="left:89px;top:969px" width="16" height="14"><rect x="0.5" y="1" width="7" height="3" rx="0.5" fill="#9ad2ee" stroke="#5aaed8" stroke-width="0.9"/><rect x="0.5" y="3.5" width="15" height="9.5" fill="url(#fgb)"/><path d="M0.5 3.5 H15.5" stroke="#5ab0dc" stroke-width="1"/><path d="M0.5 3.5 V13" stroke="#4aa6d6" stroke-width="1"/><path d="M1 12.6 H15.5 V4" stroke="url(#fgd)" stroke-width="1.4" fill="none"/></svg>
<div class="t " style="left:110px;top:969px;font-size:12.55px;color:#000">Procesy, workflow</div>
<div class="a " style="left:74px;top:991px;width:9px;height:9px;border:1px solid #9a9a9a;border-radius:1px;background:linear-gradient(#fff,#e6e6e6)"></div>
<div class="a " style="left:76px;top:995px;width:5px;height:1px;background:#2a3a8a"></div>
<div class="a " style="left:78px;top:993px;width:1px;height:5px;background:#2a3a8a"></div>
<div class="a " style="left:84px;top:995px;width:5px;height:1px;background:repeating-linear-gradient(90deg,#8a8a8a 0 1px,transparent 1px 2px)"></div>
<svg style="left:89px;top:987px" width="16" height="14"><rect x="0.5" y="1" width="7" height="3" rx="0.5" fill="#9ad2ee" stroke="#5aaed8" stroke-width="0.9"/><rect x="0.5" y="3.5" width="15" height="9.5" fill="url(#fgb)"/><path d="M0.5 3.5 H15.5" stroke="#5ab0dc" stroke-width="1"/><path d="M0.5 3.5 V13" stroke="#4aa6d6" stroke-width="1"/><path d="M1 12.6 H15.5 V4" stroke="url(#fgd)" stroke-width="1.4" fill="none"/></svg>
<div class="t " style="left:110px;top:987px;font-size:12.55px;color:#000">Projekty</div>
<div class="a " style="left:427px;top:72px;width:1253px;height:938px;background:#004a94;overflow:hidden"></div>
<div class="a " style="left:546px;top:72px;width:1px;height:938px;background:#e6edf6"></div>
<div class="a " style="left:545px;top:72px;width:1px;height:938px;background:rgba(200,215,235,0.35)"></div>
<div class="a " style="left:682px;top:72px;width:1px;height:938px;background:#e6edf6"></div>
<div class="a " style="left:681px;top:72px;width:1px;height:938px;background:rgba(200,215,235,0.35)"></div>
<div class="a " style="left:818px;top:72px;width:1px;height:938px;background:#e6edf6"></div>
<div class="a " style="left:817px;top:72px;width:1px;height:938px;background:rgba(200,215,235,0.35)"></div>
<div class="a " style="left:954px;top:72px;width:1px;height:938px;background:#e6edf6"></div>
<div class="a " style="left:953px;top:72px;width:1px;height:938px;background:rgba(200,215,235,0.35)"></div>
<div class="a " style="left:1091px;top:72px;width:1px;height:938px;background:#e6edf6"></div>
<div class="a " style="left:1090px;top:72px;width:1px;height:938px;background:rgba(200,215,235,0.35)"></div>
<div class="a " style="left:1227px;top:72px;width:1px;height:938px;background:#e6edf6"></div>
<div class="a " style="left:1226px;top:72px;width:1px;height:938px;background:rgba(200,215,235,0.35)"></div>
<div class="a " style="left:1363px;top:72px;width:1px;height:938px;background:#e6edf6"></div>
<div class="a " style="left:1362px;top:72px;width:1px;height:938px;background:rgba(200,215,235,0.35)"></div>
<div class="a " style="left:427px;top:211px;width:1253px;height:2px;background:#e4ebf4"></div>
<div class="a " style="left:427px;top:351px;width:1253px;height:2px;background:#e4ebf4"></div>
<div class="a " style="left:427px;top:491px;width:1253px;height:2px;background:#e4ebf4"></div>
<div class="a " style="left:427px;top:630px;width:1253px;height:2px;background:#e4ebf4"></div>
<div class="a " style="left:427px;top:770px;width:1253px;height:2px;background:#e4ebf4"></div>
<div class="a " style="left:427px;top:910px;width:1253px;height:2px;background:#e4ebf4"></div>
<div class="a " style="left:1678px;top:72px;width:2px;height:938px;background:#e8eef4"></div>
<svg style="left:1363px;top:72px" width="317" height="140" viewBox="0 0 317 140">
<defs><clipPath id="qc"><rect x="0" y="0" width="137" height="139"/></clipPath></defs>
<g clip-path="url(#qc)">
<circle cx="68.5" cy="69.5" r="69" fill="#fff"/>
<circle cx="69" cy="69.5" r="36" fill="#004a94"/>
<path d="M69.5 33.5 V105.5 M33 69.5 H105" stroke="#fff" stroke-width="1"/>
<path d="M69 95 L93 71 L137 115 L113 139Z" fill="#fff"/>
<path d="M137 0 V139" stroke="#004a94" stroke-width="0"/>
</g>
</svg>
<div class="a " style="left:1363px;top:72px;width:1px;height:139px;background:#e6edf6"></div>
<div class="a " style="left:1500px;top:72px;width:44px;height:938px;background-color:#004a94;background-image:repeating-linear-gradient(90deg,#fff 0 1px,transparent 1px 9px),repeating-linear-gradient(180deg,#fff 0 1px,transparent 1px 9px);background-position:0 4px"></div>
<div class="a " style="left:1543px;top:72px;width:1px;height:938px;background:#fff"></div>
<div class="a " style="left:1508px;top:72px;width:35px;height:139px;background:#fff"></div>
<div class="a " style="left:1509px;top:107px;width:34px;height:8px;background-color:#004a94;background-image:repeating-linear-gradient(90deg,transparent 0 6px,#fff 6px 7px)"></div>
<div class="a " style="left:1500px;top:72px;width:8px;height:139px;background-color:#004a94;background-image:repeating-linear-gradient(180deg,#fff 0 1px,transparent 1px 9px),linear-gradient(90deg,#fff 0 1px,transparent 1px 7px,#fff 7px 8px)"></div>
<div class="t" style="left:1551px;top:80px;height:20px;line-height:20px;font-size:19.6px;color:#fff;-webkit-text-stroke:0.5px #fff;letter-spacing:0.1px">CENTRÁLNY</div>
<div class="t" style="left:1551px;top:102px;height:20px;line-height:20px;font-size:19.6px;color:#fff;-webkit-text-stroke:0.5px #fff;letter-spacing:0.1px">MOZOG</div>
<div class="t" style="left:1551px;top:124px;height:20px;line-height:20px;font-size:19.6px;color:#fff;-webkit-text-stroke:0.5px #fff;letter-spacing:0.1px">FIRMY</div>
<svg style="left:560px;top:752px" width="80" height="72">
<defs><linearGradient id="gb" x1="0" x2="1"><stop offset="0" stop-color="#d8d8d8"/><stop offset="1" stop-color="#a8a8a8"/></linearGradient>
<linearGradient id="gb2" x1="0" x2="1"><stop offset="0" stop-color="#bcbcbc"/><stop offset="1" stop-color="#8c8c8c"/></linearGradient></defs>
<g transform="rotate(22 22 36)"><rect x="14" y="6" width="15" height="50" rx="2" fill="#2ed02e" stroke="#20a020"/><rect x="16.5" y="10" width="10" height="14" rx="1" fill="#f4f4f4"/><path d="M18 14l3 2l-3 2l3 2" stroke="#555" fill="none" stroke-width="0.8"/><circle cx="21.5" cy="45" r="3.8" fill="#333"/></g>
<rect x="38" y="6" width="16" height="50" rx="2" fill="url(#gb)" stroke="#9a9a9a"/><rect x="41" y="10" width="10" height="15" rx="1" fill="#f8f8f8"/><path d="M44 13l3 2l-3 2l3 2l-3 2" stroke="#555" fill="none" stroke-width="0.8"/><circle cx="46" cy="45" r="3.8" fill="#333"/>
<rect x="55" y="6" width="16" height="50" rx="2" fill="url(#gb2)" stroke="#808080"/><rect x="58" y="10" width="10" height="15" rx="1" fill="#f0f0f0"/><path d="M61 13l3 2l-3 2l3 2l-3 2" stroke="#555" fill="none" stroke-width="0.8"/><circle cx="63" cy="45" r="3.8" fill="#333"/>
<rect x="24" y="57" width="48" height="9" fill="#5a8ac8" opacity="0.22"/>
</svg>
<div class="a" style="left:538px;top:822px;width:120px;text-align:center;color:#fff;font-size:11.2px;line-height:13px">Žiadosti o<br>zaúčtovanie</div>
<svg style="left:570px;top:864px" width="60" height="64">
<circle cx="26" cy="24" r="21" fill="none" stroke="#c0c0c0" stroke-width="4"/>
<path d="M40 26 A14 14 0 0 1 30 38" stroke="#c8c8c8" stroke-width="4" fill="none"/>
<path d="M40 42 L52 54" stroke="#e02020" stroke-width="6" stroke-linecap="round"/>
<path d="M50 52 L53 55" stroke="#ddd" stroke-width="5" stroke-linecap="round"/>
<ellipse cx="32" cy="58" rx="18" ry="3" fill="#2a6ab0" opacity="0.45"/>
</svg>
<div class="a" style="left:538px;top:934px;width:120px;text-align:center;color:#fff;font-size:11.2px;line-height:13px">Výpis za rozsah<br>účtov</div>
<div class="a " style="left:440px;top:84px;width:901px;height:638px;background:#fff;border:1px solid #c9c9c9;border-right-color:#e6e6e6;border-bottom-color:#e6e6e6"></div>
<div class="a " style="left:441px;top:85px;width:899px;height:27px;background:#e9e9e9;border-bottom:1px solid #d6e4f0"></div>
<svg style="left:447px;top:90px" width="16" height="17"><path d="M1.5 1.5 L14 8.5 L1.5 15.5Z" fill="#fff" stroke="#f4f4f4" stroke-width="1.5" stroke-linejoin="round"/><path d="M4 13 L11 9" stroke="#aaa" stroke-width="1.2"/></svg>
<div class="t " style="left:466px;top:90px;font-weight:bold;font-size:12px;color:#3a3a3a">Účtovný denník</div>
<div class="t " style="left:1243px;top:90px;font-weight:bold;font-size:12px;color:#444">33</div>
<svg style="left:1262px;top:88px" width="76" height="20" fill="none" stroke="#111"><path d="M6 10.5 H17" stroke-width="1.2"/><rect x="31.5" y="5.5" width="10" height="10" stroke-width="1.3"/><path d="M56.5 5.5 L66 15 M66 5.5 L56.5 15" stroke-width="2.2"/></svg>
<div class="a " style="left:456px;top:120px;width:53px;height:22px;background:#f7faff;border:1px solid #cddcf4;border-bottom:none"></div>
<div class="t " style="left:464px;top:122px;font-size:11.4px;color:#333">Zoznam</div>
<div class="t " style="left:513px;top:123px;font-size:11.6px;color:#111">Detail</div>
<div class="a " style="left:508px;top:140px;width:686px;height:1px;background:#cddcf4"></div>
<div class="a " style="left:456px;top:141px;width:738px;height:570px;background:#f7faff;border:1px solid #cddcf4;border-top:none"></div>
<div class="a " style="left:469px;top:153px;width:712px;height:544px;background:#fff;border:1px solid #d6e2f4"></div>
<div class="a " style="left:470px;top:154px;width:693px;height:36px;background:linear-gradient(#fdfeff,#e9eff7)"></div>
<div class="a" style="left:472px;top:156px;font-size:10.6px;line-height:13px;color:#222;white-space:nowrap">Evidenčné číslo dokladu</div>
<div class="a " style="left:624px;top:154px;width:1px;height:36px;background:#dce8f8"></div>
<div class="a" style="left:627px;top:156px;font-size:10.6px;line-height:13px;color:#222;white-space:nowrap">Dátum zaúčtovania</div>
<div class="a " style="left:721px;top:154px;width:1px;height:36px;background:#dce8f8"></div>
<div class="a" style="left:724px;top:156px;font-size:10.6px;line-height:13px;color:#222;white-space:nowrap">Popis</div>
<div class="a " style="left:970px;top:154px;width:1px;height:36px;background:#dce8f8"></div>
<div class="a" style="left:973px;top:156px;font-size:10.6px;line-height:13px;color:#222;white-space:nowrap">Čiastka</div>
<div class="a " style="left:1036px;top:154px;width:1px;height:36px;background:#dce8f8"></div>
<div class="a" style="left:1039px;top:156px;font-size:10.6px;line-height:13px;color:#222;white-space:nowrap">Účet MD</div>
<div class="a " style="left:1100px;top:154px;width:1px;height:36px;background:#dce8f8"></div>
<div class="a" style="left:1103px;top:156px;font-size:10.6px;line-height:13px;color:#222;white-space:nowrap">Názov účtu<br>MD</div>
<div class="a " style="left:469px;top:190px;width:155px;height:18px;background:#004a70"></div>
<div class="t" style="left:471px;width:153px;top:191px;font-size:11px;color:#fff;overflow:hidden">FPT-2017-1-000002</div>
<div class="a " style="left:625px;top:190px;width:96px;height:18px;background:#004a70"></div>
<div class="t" style="left:627px;width:94px;top:191px;font-size:11px;color:#fff;overflow:hidden">29. 3. 2017</div>
<div class="a " style="left:722px;top:190px;width:248px;height:18px;background:#004a70"></div>
<div class="t" style="left:724px;width:246px;top:191px;font-size:11px;color:#fff;overflow:hidden">Nákup tovaru</div>
<div class="a " style="left:971px;top:190px;width:65px;height:18px;background:#004a70"></div>
<div class="t" style="left:971px;width:62px;top:191px;text-align:right;font-size:11px;color:#fff;overflow:hidden">165,83</div>
<div class="a " style="left:1037px;top:190px;width:63px;height:18px;background:#004a70"></div>
<div class="t" style="left:1039px;width:61px;top:191px;font-size:11px;color:#fff;overflow:hidden">111001</div>
<div class="a " style="left:1101px;top:190px;width:62px;height:18px;background:#004a70"></div>
<div class="t" style="left:1103px;width:59px;top:191px;font-size:11px;color:#fff;overflow:hidden">Obstaranie n</div>
<div class="a " style="left:469px;top:208px;width:155px;height:18px;background:#cddcf7"></div>
<div class="t" style="left:471px;width:153px;top:209px;font-size:11px;color:#111;overflow:hidden">FPT-2017-1-000002</div>
<div class="a " style="left:625px;top:208px;width:96px;height:18px;background:#f5f8fd"></div>
<div class="t" style="left:627px;width:94px;top:209px;font-size:11px;color:#111;overflow:hidden">29. 3. 2017</div>
<div class="a " style="left:722px;top:208px;width:248px;height:18px;background:#f5f8fd"></div>
<div class="t" style="left:724px;width:246px;top:209px;font-size:11px;color:#111;overflow:hidden">DPH na vstupe</div>
<div class="a " style="left:971px;top:208px;width:65px;height:18px;background:#cddcf7"></div>
<div class="t" style="left:971px;width:62px;top:209px;text-align:right;font-size:11px;color:#111;overflow:hidden">33,17</div>
<div class="a " style="left:1037px;top:208px;width:63px;height:18px;background:#f5f8fd"></div>
<div class="t" style="left:1039px;width:61px;top:209px;font-size:11px;color:#111;overflow:hidden">343001</div>
<div class="a " style="left:1101px;top:208px;width:62px;height:18px;background:#cddcf7"></div>
<div class="t" style="left:1103px;width:59px;top:209px;font-size:11px;color:#111;overflow:hidden">Daň z pridan</div>
<div class="a " style="left:469px;top:226px;width:155px;height:18px;background:#e0eafb"></div>
<div class="t" style="left:471px;width:153px;top:227px;font-size:11px;color:#111;overflow:hidden">ID-2017-000002</div>
<div class="a " style="left:625px;top:226px;width:96px;height:18px;background:#ffffff"></div>
<div class="t" style="left:627px;width:94px;top:227px;font-size:11px;color:#111;overflow:hidden">30. 3. 2017</div>
<div class="a " style="left:722px;top:226px;width:248px;height:18px;background:#ffffff"></div>
<div class="t" style="left:724px;width:246px;top:227px;font-size:11px;color:#111;overflow:hidden">Interný doklad</div>
<div class="a " style="left:971px;top:226px;width:65px;height:18px;background:#e0eafb"></div>
<div class="t" style="left:971px;width:62px;top:227px;text-align:right;font-size:11px;color:#111;overflow:hidden">100,00</div>
<div class="a " style="left:1037px;top:226px;width:63px;height:18px;background:#ffffff"></div>
<div class="t" style="left:1039px;width:61px;top:227px;font-size:11px;color:#111;overflow:hidden">32101</div>
<div class="a " style="left:1101px;top:226px;width:62px;height:18px;background:#e0eafb"></div>
<div class="t" style="left:1103px;width:59px;top:227px;font-size:11px;color:#111;overflow:hidden"></div>
<div class="a " style="left:469px;top:244px;width:155px;height:18px;background:#cddcf7"></div>
<div class="t" style="left:471px;width:153px;top:245px;font-size:11px;color:#111;overflow:hidden">ID-2017-000002</div>
<div class="a " style="left:625px;top:244px;width:96px;height:18px;background:#f5f8fd"></div>
<div class="t" style="left:627px;width:94px;top:245px;font-size:11px;color:#111;overflow:hidden">30. 3. 2017</div>
<div class="a " style="left:722px;top:244px;width:248px;height:18px;background:#f5f8fd"></div>
<div class="t" style="left:724px;width:246px;top:245px;font-size:11px;color:#111;overflow:hidden">Interný doklad</div>
<div class="a " style="left:971px;top:244px;width:65px;height:18px;background:#cddcf7"></div>
<div class="t" style="left:971px;width:62px;top:245px;text-align:right;font-size:11px;color:#111;overflow:hidden">50,00</div>
<div class="a " style="left:1037px;top:244px;width:63px;height:18px;background:#f5f8fd"></div>
<div class="t" style="left:1039px;width:61px;top:245px;font-size:11px;color:#111;overflow:hidden">395001</div>
<div class="a " style="left:1101px;top:244px;width:62px;height:18px;background:#cddcf7"></div>
<div class="t" style="left:1103px;width:59px;top:245px;font-size:11px;color:#111;overflow:hidden">Vnútorné zúč</div>
<div class="a " style="left:469px;top:262px;width:155px;height:18px;background:#e0eafb"></div>
<div class="t" style="left:471px;width:153px;top:263px;font-size:11px;color:#111;overflow:hidden">ID-2017-000002</div>
<div class="a " style="left:625px;top:262px;width:96px;height:18px;background:#ffffff"></div>
<div class="t" style="left:627px;width:94px;top:263px;font-size:11px;color:#111;overflow:hidden">30. 3. 2017</div>
<div class="a " style="left:722px;top:262px;width:248px;height:18px;background:#ffffff"></div>
<div class="t" style="left:724px;width:246px;top:263px;font-size:11px;color:#111;overflow:hidden">Interný doklad</div>
<div class="a " style="left:971px;top:262px;width:65px;height:18px;background:#e0eafb"></div>
<div class="t" style="left:971px;width:62px;top:263px;text-align:right;font-size:11px;color:#111;overflow:hidden">50,00</div>
<div class="a " style="left:1037px;top:262px;width:63px;height:18px;background:#ffffff"></div>
<div class="t" style="left:1039px;width:61px;top:263px;font-size:11px;color:#111;overflow:hidden">395001</div>
<div class="a " style="left:1101px;top:262px;width:62px;height:18px;background:#e0eafb"></div>
<div class="t" style="left:1103px;width:59px;top:263px;font-size:11px;color:#111;overflow:hidden">Vnútorné zúč</div>
<div class="a " style="left:469px;top:280px;width:155px;height:18px;background:#cddcf7"></div>
<div class="t" style="left:471px;width:153px;top:281px;font-size:11px;color:#111;overflow:hidden">HM-2017-1-000004</div>
<div class="a " style="left:625px;top:280px;width:96px;height:18px;background:#f5f8fd"></div>
<div class="t" style="left:627px;width:94px;top:281px;font-size:11px;color:#111;overflow:hidden">30. 4. 2017</div>
<div class="a " style="left:722px;top:280px;width:248px;height:18px;background:#f5f8fd"></div>
<div class="t" style="left:724px;width:246px;top:281px;font-size:11px;color:#111;overflow:hidden">Hrubá mzda zamestnanca</div>
<div class="a " style="left:971px;top:280px;width:65px;height:18px;background:#cddcf7"></div>
<div class="t" style="left:971px;width:62px;top:281px;text-align:right;font-size:11px;color:#111;overflow:hidden">2 964,20</div>
<div class="a " style="left:1037px;top:280px;width:63px;height:18px;background:#f5f8fd"></div>
<div class="t" style="left:1039px;width:61px;top:281px;font-size:11px;color:#111;overflow:hidden">521001</div>
<div class="a " style="left:1101px;top:280px;width:62px;height:18px;background:#cddcf7"></div>
<div class="t" style="left:1103px;width:59px;top:281px;font-size:11px;color:#111;overflow:hidden">Mzdové nákl</div>
<div class="a " style="left:469px;top:298px;width:155px;height:18px;background:#e0eafb"></div>
<div class="t" style="left:471px;width:153px;top:299px;font-size:11px;color:#111;overflow:hidden">HM-2017-1-000004</div>
<div class="a " style="left:625px;top:298px;width:96px;height:18px;background:#ffffff"></div>
<div class="t" style="left:627px;width:94px;top:299px;font-size:11px;color:#111;overflow:hidden">30. 4. 2017</div>
<div class="a " style="left:722px;top:298px;width:248px;height:18px;background:#ffffff"></div>
<div class="t" style="left:724px;width:246px;top:299px;font-size:11px;color:#111;overflow:hidden">Hrubá mzda zamestnanca</div>
<div class="a " style="left:971px;top:298px;width:65px;height:18px;background:#e0eafb"></div>
<div class="t" style="left:971px;width:62px;top:299px;text-align:right;font-size:11px;color:#111;overflow:hidden">1 000,00</div>
<div class="a " style="left:1037px;top:298px;width:63px;height:18px;background:#ffffff"></div>
<div class="t" style="left:1039px;width:61px;top:299px;font-size:11px;color:#111;overflow:hidden">521001</div>
<div class="a " style="left:1101px;top:298px;width:62px;height:18px;background:#e0eafb"></div>
<div class="t" style="left:1103px;width:59px;top:299px;font-size:11px;color:#111;overflow:hidden">Mzdové nákl</div>
<div class="a " style="left:469px;top:316px;width:155px;height:18px;background:#cddcf7"></div>
<div class="t" style="left:471px;width:153px;top:317px;font-size:11px;color:#111;overflow:hidden">HM-2017-1-000004</div>
<div class="a " style="left:625px;top:316px;width:96px;height:18px;background:#f5f8fd"></div>
<div class="t" style="left:627px;width:94px;top:317px;font-size:11px;color:#111;overflow:hidden">30. 4. 2017</div>
<div class="a " style="left:722px;top:316px;width:248px;height:18px;background:#f5f8fd"></div>
<div class="t" style="left:724px;width:246px;top:317px;font-size:11px;color:#111;overflow:hidden">Hrubá mzda člena štat.orgánu</div>
<div class="a " style="left:971px;top:316px;width:65px;height:18px;background:#cddcf7"></div>
<div class="t" style="left:971px;width:62px;top:317px;text-align:right;font-size:11px;color:#111;overflow:hidden">906,67</div>
<div class="a " style="left:1037px;top:316px;width:63px;height:18px;background:#f5f8fd"></div>
<div class="t" style="left:1039px;width:61px;top:317px;font-size:11px;color:#111;overflow:hidden">523001</div>
<div class="a " style="left:1101px;top:316px;width:62px;height:18px;background:#cddcf7"></div>
<div class="t" style="left:1103px;width:59px;top:317px;font-size:11px;color:#111;overflow:hidden">Odmeny člen</div>
<div class="a " style="left:469px;top:334px;width:155px;height:18px;background:#e0eafb"></div>
<div class="t" style="left:471px;width:153px;top:335px;font-size:11px;color:#111;overflow:hidden">HM-2017-1-000004</div>
<div class="a " style="left:625px;top:334px;width:96px;height:18px;background:#ffffff"></div>
<div class="t" style="left:627px;width:94px;top:335px;font-size:11px;color:#111;overflow:hidden">30. 4. 2017</div>
<div class="a " style="left:722px;top:334px;width:248px;height:18px;background:#ffffff"></div>
<div class="t" style="left:724px;width:246px;top:335px;font-size:11px;color:#111;overflow:hidden">Hrubá mzda člena štat.orgánu</div>
<div class="a " style="left:971px;top:334px;width:65px;height:18px;background:#e0eafb"></div>
<div class="t" style="left:971px;width:62px;top:335px;text-align:right;font-size:11px;color:#111;overflow:hidden">34,17</div>
<div class="a " style="left:1037px;top:334px;width:63px;height:18px;background:#ffffff"></div>
<div class="t" style="left:1039px;width:61px;top:335px;font-size:11px;color:#111;overflow:hidden">523001</div>
<div class="a " style="left:1101px;top:334px;width:62px;height:18px;background:#e0eafb"></div>
<div class="t" style="left:1103px;width:59px;top:335px;font-size:11px;color:#111;overflow:hidden">Odmeny člen</div>
<div class="a " style="left:469px;top:352px;width:155px;height:18px;background:#cddcf7"></div>
<div class="t" style="left:471px;width:153px;top:353px;font-size:11px;color:#111;overflow:hidden">HM-2017-1-000004</div>
<div class="a " style="left:625px;top:352px;width:96px;height:18px;background:#f5f8fd"></div>
<div class="t" style="left:627px;width:94px;top:353px;font-size:11px;color:#111;overflow:hidden">30. 4. 2017</div>
<div class="a " style="left:722px;top:352px;width:248px;height:18px;background:#f5f8fd"></div>
<div class="t" style="left:724px;width:246px;top:353px;font-size:11px;color:#111;overflow:hidden">Hrubá mzda člena štat.orgánu</div>
<div class="a " style="left:971px;top:352px;width:65px;height:18px;background:#cddcf7"></div>
<div class="t" style="left:971px;width:62px;top:353px;text-align:right;font-size:11px;color:#111;overflow:hidden">187,91</div>
<div class="a " style="left:1037px;top:352px;width:63px;height:18px;background:#f5f8fd"></div>
<div class="t" style="left:1039px;width:61px;top:353px;font-size:11px;color:#111;overflow:hidden">523001</div>
<div class="a " style="left:1101px;top:352px;width:62px;height:18px;background:#cddcf7"></div>
<div class="t" style="left:1103px;width:59px;top:353px;font-size:11px;color:#111;overflow:hidden">Odmeny člen</div>
<div class="a " style="left:469px;top:370px;width:155px;height:18px;background:#e0eafb"></div>
<div class="t" style="left:471px;width:153px;top:371px;font-size:11px;color:#111;overflow:hidden">HM-2017-1-000004</div>
<div class="a " style="left:625px;top:370px;width:96px;height:18px;background:#ffffff"></div>
<div class="t" style="left:627px;width:94px;top:371px;font-size:11px;color:#111;overflow:hidden">30. 4. 2017</div>
<div class="a " style="left:722px;top:370px;width:248px;height:18px;background:#ffffff"></div>
<div class="t" style="left:724px;width:246px;top:371px;font-size:11px;color:#111;overflow:hidden">Hrubá mzda člena štat.orgánu</div>
<div class="a " style="left:971px;top:370px;width:65px;height:18px;background:#e0eafb"></div>
<div class="t" style="left:971px;width:62px;top:371px;text-align:right;font-size:11px;color:#111;overflow:hidden">269,82</div>
<div class="a " style="left:1037px;top:370px;width:63px;height:18px;background:#ffffff"></div>
<div class="t" style="left:1039px;width:61px;top:371px;font-size:11px;color:#111;overflow:hidden">523001</div>
<div class="a " style="left:1101px;top:370px;width:62px;height:18px;background:#e0eafb"></div>
<div class="t" style="left:1103px;width:59px;top:371px;font-size:11px;color:#111;overflow:hidden">Odmeny člen</div>
<div class="a " style="left:469px;top:388px;width:155px;height:18px;background:#cddcf7"></div>
<div class="t" style="left:471px;width:153px;top:389px;font-size:11px;color:#111;overflow:hidden">DANP-2017-1-000004</div>
<div class="a " style="left:625px;top:388px;width:96px;height:18px;background:#f5f8fd"></div>
<div class="t" style="left:627px;width:94px;top:389px;font-size:11px;color:#111;overflow:hidden">30. 4. 2017</div>
<div class="a " style="left:722px;top:388px;width:248px;height:18px;background:#f5f8fd"></div>
<div class="t" style="left:724px;width:246px;top:389px;font-size:11px;color:#111;overflow:hidden">Preddavok dane zo mzdy zamestnanca</div>
<div class="a " style="left:971px;top:388px;width:65px;height:18px;background:#cddcf7"></div>
<div class="t" style="left:971px;width:62px;top:389px;text-align:right;font-size:11px;color:#111;overflow:hidden">275,32</div>
<div class="a " style="left:1037px;top:388px;width:63px;height:18px;background:#f5f8fd"></div>
<div class="t" style="left:1039px;width:61px;top:389px;font-size:11px;color:#111;overflow:hidden">331001</div>
<div class="a " style="left:1101px;top:388px;width:62px;height:18px;background:#cddcf7"></div>
<div class="t" style="left:1103px;width:59px;top:389px;font-size:11px;color:#111;overflow:hidden">Zamestnanci</div>
<div class="a " style="left:469px;top:406px;width:155px;height:18px;background:#e0eafb"></div>
<div class="t" style="left:471px;width:153px;top:407px;font-size:11px;color:#111;overflow:hidden">DANP-2017-1-000004</div>
<div class="a " style="left:625px;top:406px;width:96px;height:18px;background:#ffffff"></div>
<div class="t" style="left:627px;width:94px;top:407px;font-size:11px;color:#111;overflow:hidden">30. 4. 2017</div>
<div class="a " style="left:722px;top:406px;width:248px;height:18px;background:#ffffff"></div>
<div class="t" style="left:724px;width:246px;top:407px;font-size:11px;color:#111;overflow:hidden">Preddavok dane zo mzdy zamestnanca</div>
<div class="a " style="left:971px;top:406px;width:65px;height:18px;background:#e0eafb"></div>
<div class="t" style="left:971px;width:62px;top:407px;text-align:right;font-size:11px;color:#111;overflow:hidden">112,87</div>
<div class="a " style="left:1037px;top:406px;width:63px;height:18px;background:#ffffff"></div>
<div class="t" style="left:1039px;width:61px;top:407px;font-size:11px;color:#111;overflow:hidden">331001</div>
<div class="a " style="left:1101px;top:406px;width:62px;height:18px;background:#e0eafb"></div>
<div class="t" style="left:1103px;width:59px;top:407px;font-size:11px;color:#111;overflow:hidden">Zamestnanci</div>
<div class="a " style="left:469px;top:424px;width:155px;height:18px;background:#cddcf7"></div>
<div class="t" style="left:471px;width:153px;top:425px;font-size:11px;color:#111;overflow:hidden">DANP-2017-1-000004</div>
<div class="a " style="left:625px;top:424px;width:96px;height:18px;background:#f5f8fd"></div>
<div class="t" style="left:627px;width:94px;top:425px;font-size:11px;color:#111;overflow:hidden">30. 4. 2017</div>
<div class="a " style="left:722px;top:424px;width:248px;height:18px;background:#f5f8fd"></div>
<div class="t" style="left:724px;width:246px;top:425px;font-size:11px;color:#111;overflow:hidden">Preddavok dane zo mzdy člena štat.orgánu</div>
<div class="a " style="left:971px;top:424px;width:65px;height:18px;background:#cddcf7"></div>
<div class="t" style="left:971px;width:62px;top:425px;text-align:right;font-size:11px;color:#111;overflow:hidden">184,80</div>
<div class="a " style="left:1037px;top:424px;width:63px;height:18px;background:#f5f8fd"></div>
<div class="t" style="left:1039px;width:61px;top:425px;font-size:11px;color:#111;overflow:hidden">379001</div>
<div class="a " style="left:1101px;top:424px;width:62px;height:18px;background:#cddcf7"></div>
<div class="t" style="left:1103px;width:59px;top:425px;font-size:11px;color:#111;overflow:hidden">Iné záväzky</div>
<div class="a " style="left:469px;top:442px;width:155px;height:18px;background:#e0eafb"></div>
<div class="t" style="left:471px;width:153px;top:443px;font-size:11px;color:#111;overflow:hidden">DANP-2017-1-000004</div>
<div class="a " style="left:625px;top:442px;width:96px;height:18px;background:#ffffff"></div>
<div class="t" style="left:627px;width:94px;top:443px;font-size:11px;color:#111;overflow:hidden">30. 4. 2017</div>
<div class="a " style="left:722px;top:442px;width:248px;height:18px;background:#ffffff"></div>
<div class="t" style="left:724px;width:246px;top:443px;font-size:11px;color:#111;overflow:hidden">Daňový bonus zamestnanca</div>
<div class="a " style="left:971px;top:442px;width:65px;height:18px;background:#e0eafb"></div>
<div class="t" style="left:971px;width:62px;top:443px;text-align:right;font-size:11px;color:#8a0000;overflow:hidden">-21,41</div>
<div class="a " style="left:1037px;top:442px;width:63px;height:18px;background:#ffffff"></div>
<div class="t" style="left:1039px;width:61px;top:443px;font-size:11px;color:#111;overflow:hidden">331001</div>
<div class="a " style="left:1101px;top:442px;width:62px;height:18px;background:#e0eafb"></div>
<div class="t" style="left:1103px;width:59px;top:443px;font-size:11px;color:#111;overflow:hidden">Zamestnanci</div>
<div class="a " style="left:469px;top:460px;width:155px;height:18px;background:#cddcf7"></div>
<div class="t" style="left:471px;width:153px;top:461px;font-size:11px;color:#111;overflow:hidden">DANP-2017-1-000004</div>
<div class="a " style="left:625px;top:460px;width:96px;height:18px;background:#f5f8fd"></div>
<div class="t" style="left:627px;width:94px;top:461px;font-size:11px;color:#111;overflow:hidden">30. 4. 2017</div>
<div class="a " style="left:722px;top:460px;width:248px;height:18px;background:#f5f8fd"></div>
<div class="t" style="left:724px;width:246px;top:461px;font-size:11px;color:#111;overflow:hidden">Daňový bonus zamestnanca</div>
<div class="a " style="left:971px;top:460px;width:65px;height:18px;background:#cddcf7"></div>
<div class="t" style="left:971px;width:62px;top:461px;text-align:right;font-size:11px;color:#8a0000;overflow:hidden">-21,41</div>
<div class="a " style="left:1037px;top:460px;width:63px;height:18px;background:#f5f8fd"></div>
<div class="t" style="left:1039px;width:61px;top:461px;font-size:11px;color:#111;overflow:hidden">331001</div>
<div class="a " style="left:1101px;top:460px;width:62px;height:18px;background:#cddcf7"></div>
<div class="t" style="left:1103px;width:59px;top:461px;font-size:11px;color:#111;overflow:hidden">Zamestnanci</div>
<div class="a " style="left:469px;top:478px;width:155px;height:18px;background:#e0eafb"></div>
<div class="t" style="left:471px;width:153px;top:479px;font-size:11px;color:#111;overflow:hidden">DANP-2017-1-000004</div>
<div class="a " style="left:625px;top:478px;width:96px;height:18px;background:#ffffff"></div>
<div class="t" style="left:627px;width:94px;top:479px;font-size:11px;color:#111;overflow:hidden">30. 4. 2017</div>
<div class="a " style="left:722px;top:478px;width:248px;height:18px;background:#ffffff"></div>
<div class="t" style="left:724px;width:246px;top:479px;font-size:11px;color:#111;overflow:hidden">Daňový bonus člena štat.orgánu</div>
<div class="a " style="left:971px;top:478px;width:65px;height:18px;background:#e0eafb"></div>
<div class="t" style="left:971px;width:62px;top:479px;text-align:right;font-size:11px;color:#8a0000;overflow:hidden">-21,41</div>
<div class="a " style="left:1037px;top:478px;width:63px;height:18px;background:#ffffff"></div>
<div class="t" style="left:1039px;width:61px;top:479px;font-size:11px;color:#111;overflow:hidden">379001</div>
<div class="a " style="left:1101px;top:478px;width:62px;height:18px;background:#e0eafb"></div>
<div class="t" style="left:1103px;width:59px;top:479px;font-size:11px;color:#111;overflow:hidden">Iné záväzky</div>
<div class="a " style="left:469px;top:496px;width:155px;height:18px;background:#cddcf7"></div>
<div class="t" style="left:471px;width:153px;top:497px;font-size:11px;color:#111;overflow:hidden">VYPLU-2017-1-000016</div>
<div class="a " style="left:625px;top:496px;width:96px;height:18px;background:#f5f8fd"></div>
<div class="t" style="left:627px;width:94px;top:497px;font-size:11px;color:#111;overflow:hidden">30. 4. 2017</div>
<div class="a " style="left:722px;top:496px;width:248px;height:18px;background:#f5f8fd"></div>
<div class="t" style="left:724px;width:246px;top:497px;font-size:11px;color:#111;overflow:hidden">Výplata na účet</div>
<div class="a " style="left:971px;top:496px;width:65px;height:18px;background:#cddcf7"></div>
<div class="t" style="left:971px;width:62px;top:497px;text-align:right;font-size:11px;color:#111;overflow:hidden">251,55</div>
<div class="a " style="left:1037px;top:496px;width:63px;height:18px;background:#f5f8fd"></div>
<div class="t" style="left:1039px;width:61px;top:497px;font-size:11px;color:#111;overflow:hidden">331001</div>
<div class="a " style="left:1101px;top:496px;width:62px;height:18px;background:#cddcf7"></div>
<div class="t" style="left:1103px;width:59px;top:497px;font-size:11px;color:#111;overflow:hidden">Zamestnanci</div>
<div class="a " style="left:469px;top:514px;width:155px;height:18px;background:#e0eafb"></div>
<div class="t" style="left:471px;width:153px;top:515px;font-size:11px;color:#111;overflow:hidden">BV-2017-1-0003(2)</div>
<div class="a " style="left:625px;top:514px;width:96px;height:18px;background:#ffffff"></div>
<div class="t" style="left:627px;width:94px;top:515px;font-size:11px;color:#111;overflow:hidden">16. 5. 2017</div>
<div class="a " style="left:722px;top:514px;width:248px;height:18px;background:#ffffff"></div>
<div class="t" style="left:724px;width:246px;top:515px;font-size:11px;color:#111;overflow:hidden">Úhrada dokladu&nbsp; FPT-2014-1-000004</div>
<div class="a " style="left:971px;top:514px;width:65px;height:18px;background:#e0eafb"></div>
<div class="t" style="left:971px;width:62px;top:515px;text-align:right;font-size:11px;color:#111;overflow:hidden">20,00</div>
<div class="a " style="left:1037px;top:514px;width:63px;height:18px;background:#ffffff"></div>
<div class="t" style="left:1039px;width:61px;top:515px;font-size:11px;color:#111;overflow:hidden">321001</div>
<div class="a " style="left:1101px;top:514px;width:62px;height:18px;background:#e0eafb"></div>
<div class="t" style="left:1103px;width:59px;top:515px;font-size:11px;color:#111;overflow:hidden">Dodávatelia</div>
<div class="a " style="left:469px;top:532px;width:155px;height:18px;background:#cddcf7"></div>
<div class="t" style="left:471px;width:153px;top:533px;font-size:11px;color:#111;overflow:hidden">FPT-2017-1-000004</div>
<div class="a " style="left:625px;top:532px;width:96px;height:18px;background:#f5f8fd"></div>
<div class="t" style="left:627px;width:94px;top:533px;font-size:11px;color:#111;overflow:hidden">19. 5. 2017</div>
<div class="a " style="left:722px;top:532px;width:248px;height:18px;background:#f5f8fd"></div>
<div class="t" style="left:724px;width:246px;top:533px;font-size:11px;color:#111;overflow:hidden">Tovar</div>
<div class="a " style="left:971px;top:532px;width:65px;height:18px;background:#cddcf7"></div>
<div class="t" style="left:971px;width:62px;top:533px;text-align:right;font-size:11px;color:#111;overflow:hidden">833,33</div>
<div class="a " style="left:1037px;top:532px;width:63px;height:18px;background:#f5f8fd"></div>
<div class="t" style="left:1039px;width:61px;top:533px;font-size:11px;color:#111;overflow:hidden">111001</div>
<div class="a " style="left:1101px;top:532px;width:62px;height:18px;background:#cddcf7"></div>
<div class="t" style="left:1103px;width:59px;top:533px;font-size:11px;color:#111;overflow:hidden">Obstaranie n</div>
<div class="a " style="left:469px;top:550px;width:155px;height:18px;background:#e0eafb"></div>
<div class="t" style="left:471px;width:153px;top:551px;font-size:11px;color:#111;overflow:hidden">FPT-2017-1-000004</div>
<div class="a " style="left:625px;top:550px;width:96px;height:18px;background:#ffffff"></div>
<div class="t" style="left:627px;width:94px;top:551px;font-size:11px;color:#111;overflow:hidden">19. 5. 2017</div>
<div class="a " style="left:722px;top:550px;width:248px;height:18px;background:#ffffff"></div>
<div class="t" style="left:724px;width:246px;top:551px;font-size:11px;color:#111;overflow:hidden">DPH na vstupe</div>
<div class="a " style="left:971px;top:550px;width:65px;height:18px;background:#e0eafb"></div>
<div class="t" style="left:971px;width:62px;top:551px;text-align:right;font-size:11px;color:#111;overflow:hidden">166,67</div>
<div class="a " style="left:1037px;top:550px;width:63px;height:18px;background:#ffffff"></div>
<div class="t" style="left:1039px;width:61px;top:551px;font-size:11px;color:#111;overflow:hidden">343001</div>
<div class="a " style="left:1101px;top:550px;width:62px;height:18px;background:#e0eafb"></div>
<div class="t" style="left:1103px;width:59px;top:551px;font-size:11px;color:#111;overflow:hidden">Daň z pridan</div>
<div class="a " style="left:469px;top:568px;width:155px;height:18px;background:#cddcf7"></div>
<div class="t" style="left:471px;width:153px;top:569px;font-size:11px;color:#111;overflow:hidden">FPT-2017-1-000006</div>
<div class="a " style="left:625px;top:568px;width:96px;height:18px;background:#f5f8fd"></div>
<div class="t" style="left:627px;width:94px;top:569px;font-size:11px;color:#111;overflow:hidden">31. 8. 2017</div>
<div class="a " style="left:722px;top:568px;width:248px;height:18px;background:#f5f8fd"></div>
<div class="t" style="left:724px;width:246px;top:569px;font-size:11px;color:#111;overflow:hidden">Faktúra prijatá</div>
<div class="a " style="left:971px;top:568px;width:65px;height:18px;background:#cddcf7"></div>
<div class="t" style="left:971px;width:62px;top:569px;text-align:right;font-size:11px;color:#111;overflow:hidden">5 000,00</div>
<div class="a " style="left:1037px;top:568px;width:63px;height:18px;background:#f5f8fd"></div>
<div class="t" style="left:1039px;width:61px;top:569px;font-size:11px;color:#111;overflow:hidden">111001</div>
<div class="a " style="left:1101px;top:568px;width:62px;height:18px;background:#cddcf7"></div>
<div class="t" style="left:1103px;width:59px;top:569px;font-size:11px;color:#111;overflow:hidden">Obstaranie n</div>
<div class="a " style="left:469px;top:586px;width:155px;height:18px;background:#e0eafb"></div>
<div class="t" style="left:471px;width:153px;top:587px;font-size:11px;color:#111;overflow:hidden">FPT-2017-1-000006</div>
<div class="a " style="left:625px;top:586px;width:96px;height:18px;background:#ffffff"></div>
<div class="t" style="left:627px;width:94px;top:587px;font-size:11px;color:#111;overflow:hidden">31. 8. 2017</div>
<div class="a " style="left:722px;top:586px;width:248px;height:18px;background:#ffffff"></div>
<div class="t" style="left:724px;width:246px;top:587px;font-size:11px;color:#111;overflow:hidden">DPH na vstupe</div>
<div class="a " style="left:971px;top:586px;width:65px;height:18px;background:#e0eafb"></div>
<div class="t" style="left:971px;width:62px;top:587px;text-align:right;font-size:11px;color:#111;overflow:hidden">1 000,00</div>
<div class="a " style="left:1037px;top:586px;width:63px;height:18px;background:#ffffff"></div>
<div class="t" style="left:1039px;width:61px;top:587px;font-size:11px;color:#111;overflow:hidden">343001</div>
<div class="a " style="left:1101px;top:586px;width:62px;height:18px;background:#e0eafb"></div>
<div class="t" style="left:1103px;width:59px;top:587px;font-size:11px;color:#111;overflow:hidden">Daň z pridan</div>
<div class="a " style="left:469px;top:604px;width:155px;height:18px;background:#cddcf7"></div>
<div class="t" style="left:471px;width:153px;top:605px;font-size:11px;color:#111;overflow:hidden">FPT-2017-1-000007</div>
<div class="a " style="left:625px;top:604px;width:96px;height:18px;background:#f5f8fd"></div>
<div class="t" style="left:627px;width:94px;top:605px;font-size:11px;color:#111;overflow:hidden">16. 10. 2017</div>
<div class="a " style="left:722px;top:604px;width:248px;height:18px;background:#f5f8fd"></div>
<div class="t" style="left:724px;width:246px;top:605px;font-size:11px;color:#111;overflow:hidden">Faktúra prijatá</div>
<div class="a " style="left:971px;top:604px;width:65px;height:18px;background:#cddcf7"></div>
<div class="t" style="left:971px;width:62px;top:605px;text-align:right;font-size:11px;color:#111;overflow:hidden">100,00</div>
<div class="a " style="left:1037px;top:604px;width:63px;height:18px;background:#f5f8fd"></div>
<div class="t" style="left:1039px;width:61px;top:605px;font-size:11px;color:#111;overflow:hidden">111001</div>
<div class="a " style="left:1101px;top:604px;width:62px;height:18px;background:#cddcf7"></div>
<div class="t" style="left:1103px;width:59px;top:605px;font-size:11px;color:#111;overflow:hidden">Obstaranie n</div>
<div class="a " style="left:469px;top:622px;width:155px;height:18px;background:#e0eafb"></div>
<div class="t" style="left:471px;width:153px;top:623px;font-size:11px;color:#111;overflow:hidden">FPT-2017-1-000007</div>
<div class="a " style="left:625px;top:622px;width:96px;height:18px;background:#ffffff"></div>
<div class="t" style="left:627px;width:94px;top:623px;font-size:11px;color:#111;overflow:hidden">16. 10. 2017</div>
<div class="a " style="left:722px;top:622px;width:248px;height:18px;background:#ffffff"></div>
<div class="t" style="left:724px;width:246px;top:623px;font-size:11px;color:#111;overflow:hidden">DPH na vstupe</div>
<div class="a " style="left:971px;top:622px;width:65px;height:18px;background:#e0eafb"></div>
<div class="t" style="left:971px;width:62px;top:623px;text-align:right;font-size:11px;color:#111;overflow:hidden">20,00</div>
<div class="a " style="left:1037px;top:622px;width:63px;height:18px;background:#ffffff"></div>
<div class="t" style="left:1039px;width:61px;top:623px;font-size:11px;color:#111;overflow:hidden">343001</div>
<div class="a " style="left:1101px;top:622px;width:62px;height:18px;background:#e0eafb"></div>
<div class="t" style="left:1103px;width:59px;top:623px;font-size:11px;color:#111;overflow:hidden">Daň z pridan</div>
<div class="a " style="left:469px;top:640px;width:155px;height:18px;background:#cddcf7"></div>
<div class="t" style="left:471px;width:153px;top:641px;font-size:11px;color:#111;overflow:hidden">FPT-2017-1-000008</div>
<div class="a " style="left:625px;top:640px;width:96px;height:18px;background:#f5f8fd"></div>
<div class="t" style="left:627px;width:94px;top:641px;font-size:11px;color:#111;overflow:hidden">17. 10. 2017</div>
<div class="a " style="left:722px;top:640px;width:248px;height:18px;background:#f5f8fd"></div>
<div class="t" style="left:724px;width:246px;top:641px;font-size:11px;color:#111;overflow:hidden">Faktúra prijatá</div>
<div class="a " style="left:971px;top:640px;width:65px;height:18px;background:#cddcf7"></div>
<div class="t" style="left:971px;width:62px;top:641px;text-align:right;font-size:11px;color:#111;overflow:hidden">100,00</div>
<div class="a " style="left:1037px;top:640px;width:63px;height:18px;background:#f5f8fd"></div>
<div class="t" style="left:1039px;width:61px;top:641px;font-size:11px;color:#111;overflow:hidden">111001</div>
<div class="a " style="left:1101px;top:640px;width:62px;height:18px;background:#cddcf7"></div>
<div class="t" style="left:1103px;width:59px;top:641px;font-size:11px;color:#111;overflow:hidden">Obstaranie n</div>
<div class="a " style="left:469px;top:658px;width:155px;height:18px;background:#e0eafb"></div>
<div class="t" style="left:471px;width:153px;top:659px;font-size:11px;color:#111;overflow:hidden">FPT-2017-1-000008</div>
<div class="a " style="left:625px;top:658px;width:96px;height:18px;background:#ffffff"></div>
<div class="t" style="left:627px;width:94px;top:659px;font-size:11px;color:#111;overflow:hidden">17. 10. 2017</div>
<div class="a " style="left:722px;top:658px;width:248px;height:18px;background:#ffffff"></div>
<div class="t" style="left:724px;width:246px;top:659px;font-size:11px;color:#111;overflow:hidden">DPH na vstupe</div>
<div class="a " style="left:971px;top:658px;width:65px;height:18px;background:#e0eafb"></div>
<div class="t" style="left:971px;width:62px;top:659px;text-align:right;font-size:11px;color:#111;overflow:hidden">20,00</div>
<div class="a " style="left:1037px;top:658px;width:63px;height:18px;background:#ffffff"></div>
<div class="t" style="left:1039px;width:61px;top:659px;font-size:11px;color:#111;overflow:hidden">343001</div>
<div class="a " style="left:1101px;top:658px;width:62px;height:18px;background:#e0eafb"></div>
<div class="t" style="left:1103px;width:59px;top:659px;font-size:11px;color:#111;overflow:hidden">Daň z pridan</div>
<div class="a " style="left:1163px;top:154px;width:18px;height:524px;background:#f2f6fa"></div>
<div class="a " style="left:1163px;top:171px;width:18px;height:225px;background:#d7e4f2"></div>
<svg style="left:1165px;top:156px" width="14" height="12"><path d="M3 8 L7 4 L11 8" stroke="#111" stroke-width="2" fill="none"/></svg>
<svg style="left:1165px;top:665px" width="14" height="12"><path d="M3 4 L7 8 L11 4" stroke="#111" stroke-width="2" fill="none"/></svg>
<div class="a " style="left:471px;top:676px;width:692px;height:20px;background:#f2f6fa"></div>
<div class="a " style="left:488px;top:677px;width:17px;height:18px;background:#d7e4f2"></div>
<svg style="left:472px;top:680px" width="12" height="14"><path d="M8 3 L4 7 L8 11" stroke="#111" stroke-width="2" fill="none"/></svg>
<svg style="left:1148px;top:680px" width="12" height="14"><path d="M4 3 L8 7 L4 11" stroke="#111" stroke-width="2" fill="none"/></svg>
<div class="a " style="left:1203px;top:121px;width:127px;height:20px;background:#dde9fc;border:1px solid #c8d8f6"></div>
<div class="t" style="left:1203px;width:127px;top:123px;text-align:center;font-weight:bold;font-size:12px;color:#1a1a1a">2017</div>
<div class="a " style="left:1202px;top:148px;width:128px;height:22px;background:#4f88b8"></div><div class="t" style="left:1202px;width:128px;top:151.0px;text-align:center;font-size:10.9px;color:#fff">Zobrazenie dokladu</div>
<div class="a " style="left:1202px;top:176px;width:128px;height:22px;background:#4f88b8"></div><div class="t" style="left:1202px;width:128px;top:179.0px;text-align:center;font-size:10.9px;color:#fff">Odúčtovanie záznamu</div>
<div class="a " style="left:1202px;top:204px;width:128px;height:22px;background:#4f88b8"></div><div class="t" style="left:1202px;width:128px;top:207.0px;text-align:center;font-size:10.9px;color:#fff">Účtovné položky</div>
<div class="a " style="left:1202px;top:257px;width:128px;height:22px;background:#4f88b8"></div><div class="t" style="left:1202px;width:120px;top:260.0px;text-align:center;font-size:10.9px;color:#fff">Audit denníka</div><svg style="left:1318px;top:263.0px" width="8" height="10"><path d="M1 1 L6 5 L1 9Z" fill="#fff"/></svg>
<div class="a " style="left:1202px;top:285px;width:128px;height:22px;background:#4f88b8"></div><div class="t" style="left:1202px;width:120px;top:288.0px;text-align:center;font-size:10.9px;color:#fff">Zrušenie auditu</div><svg style="left:1318px;top:291.0px" width="8" height="10"><path d="M1 1 L6 5 L1 9Z" fill="#fff"/></svg>
<div class="a " style="left:1202px;top:658px;width:128px;height:22px;background:#4f88b8"></div>
<div class="a " style="left:1202px;top:686px;width:128px;height:22px;background:#4f88b8"></div>
<div class="a " style="left:1229px;top:429px;width:392px;height:300px;background:#fff;border:1px solid #c9c9c9"></div>
<div class="a " style="left:1230px;top:430px;width:390px;height:27px;background:#e9e9e9;border-bottom:1px solid #d6e4f0"></div>
<svg style="left:1236px;top:435px" width="16" height="17"><path d="M1.5 1.5 L13 8 L1.5 14.5Z" fill="#fff" stroke="#f4f4f4" stroke-width="1.5" stroke-linejoin="round"/><path d="M4 12 L10 8.5" stroke="#aaa" stroke-width="1.2"/></svg>
<div class="t " style="left:1255px;top:435px;font-weight:bold;font-size:12px;color:#3a3a3a">Parametre výberu účtu - saldo</div>
<div class="t " style="left:1529px;top:435px;font-weight:bold;font-size:12px;color:#444">1</div>
<svg style="left:1542px;top:433px" width="76" height="20" fill="none" stroke="#111"><path d="M6 10.5 H17" stroke-width="1.2"/><rect x="31.5" y="5.5" width="10" height="10" stroke-width="1.3"/><path d="M56.5 5.5 L66 15 M66 5.5 L56.5 15" stroke-width="2.2"/></svg>
<div class="a" style="left:1240px;top:472px;width:110px;height:16px;display:flex;font-size:10.9px;line-height:16px;white-space:nowrap;color:#1a1a1a"><span>Dátum od</span><span style="flex:1;margin-left:6px;background:linear-gradient(90deg,transparent 0 5.7px,#2a2a3a 5.7px 7px) right 10px/7px 2px repeat-x"></span></div>
<div class="a " style="left:1362px;top:466px;width:118px;height:19px;background:#fff;border:1px solid #c8d8f4"></div>
<div class="t " style="left:1364px;top:467px;font-size:11.4px;color:#1a1a1a">1. 1. 2017</div>
<svg style="left:1462px;top:470px" width="14" height="12"><path d="M3 3.5 L7 7.5 L11 3.5" stroke="#111" stroke-width="2" fill="none"/></svg>
<div class="a" style="left:1240px;top:496px;width:110px;height:16px;display:flex;font-size:10.9px;line-height:16px;white-space:nowrap;color:#1a1a1a"><span>Dátum do</span><span style="flex:1;margin-left:6px;background:linear-gradient(90deg,transparent 0 5.7px,#2a2a3a 5.7px 7px) right 10px/7px 2px repeat-x"></span></div>
<div class="a " style="left:1362px;top:490px;width:118px;height:19px;background:#fff;border:1px solid #c8d8f4"></div>
<div class="t " style="left:1364px;top:491px;font-size:11.4px;color:#1a1a1a">31. 12. 2017</div>
<svg style="left:1462px;top:494px" width="14" height="12"><path d="M3 3.5 L7 7.5 L11 3.5" stroke="#111" stroke-width="2" fill="none"/></svg>
<div class="a" style="left:1240px;top:520px;width:110px;height:16px;display:flex;font-size:10.9px;line-height:16px;white-space:nowrap;color:#1a1a1a"><span>Účet</span><span style="flex:1;margin-left:6px;background:linear-gradient(90deg,transparent 0 5.7px,#2a2a3a 5.7px 7px) right 10px/7px 2px repeat-x"></span></div>
<div class="a " style="left:1362px;top:514px;width:118px;height:19px;background:#fff;border:1px solid #c8d8f4"></div>
<div class="t " style="left:1364px;top:515px;font-size:11.4px;color:#1a1a1a">321001</div>
<div class="a " style="left:1460px;top:515px;width:19px;height:17px;background:#fbfcfe"></div>
<div class="t" style="left:1463px;top:515px;font-size:11px;font-weight:bold;letter-spacing:0.5px;color:#111;line-height:12px">...</div>
<div class="a" style="left:1240px;top:544px;width:110px;height:16px;display:flex;font-size:10.9px;line-height:16px;white-space:nowrap;color:#1a1a1a"><span>Stredisko</span><span style="flex:1;margin-left:6px;background:linear-gradient(90deg,transparent 0 5.7px,#2a2a3a 5.7px 7px) right 10px/7px 2px repeat-x"></span></div>
<div class="a " style="left:1362px;top:538px;width:206px;height:19px;background:#fff;border:1px solid #c8d8f4"></div>
<div class="a " style="left:1548px;top:539px;width:19px;height:17px;background:#fbfcfe"></div>
<div class="t" style="left:1551px;top:539px;font-size:11px;font-weight:bold;letter-spacing:0.5px;color:#111;line-height:12px">...</div>
<div class="a " style="left:1574px;top:538px;width:34px;height:19px;background:#dde9fc;border:1px solid #c8d8f4"></div>
<div class="a" style="left:1240px;top:568px;width:110px;height:16px;display:flex;font-size:10.9px;line-height:16px;white-space:nowrap;color:#1a1a1a"><span>Akcia</span><span style="flex:1;margin-left:6px;background:linear-gradient(90deg,transparent 0 5.7px,#2a2a3a 5.7px 7px) right 10px/7px 2px repeat-x"></span></div>
<div class="a " style="left:1362px;top:562px;width:206px;height:19px;background:#fff;border:1px solid #c8d8f4"></div>
<div class="a " style="left:1548px;top:563px;width:19px;height:17px;background:#fbfcfe"></div>
<div class="t" style="left:1551px;top:563px;font-size:11px;font-weight:bold;letter-spacing:0.5px;color:#111;line-height:12px">...</div>
<div class="a " style="left:1574px;top:562px;width:34px;height:19px;background:#dde9fc;border:1px solid #c8d8f4"></div>
<div class="a" style="left:1240px;top:592px;width:110px;height:16px;display:flex;font-size:10.9px;line-height:16px;white-space:nowrap;color:#1a1a1a"><span>Kalkulačná jednotka</span><span style="flex:1;margin-left:6px;background:linear-gradient(90deg,transparent 0 5.7px,#2a2a3a 5.7px 7px) right 10px/7px 2px repeat-x"></span></div>
<div class="a " style="left:1362px;top:586px;width:206px;height:19px;background:#fff;border:1px solid #c8d8f4"></div>
<div class="a " style="left:1548px;top:587px;width:19px;height:17px;background:#fbfcfe"></div>
<div class="t" style="left:1551px;top:587px;font-size:11px;font-weight:bold;letter-spacing:0.5px;color:#111;line-height:12px">...</div>
<div class="a " style="left:1574px;top:586px;width:34px;height:19px;background:#dde9fc;border:1px solid #c8d8f4"></div>
<div class="a" style="left:1240px;top:616px;width:110px;height:16px;display:flex;font-size:10.9px;line-height:16px;white-space:nowrap;color:#1a1a1a"><span>Odbor</span><span style="flex:1;margin-left:6px;background:linear-gradient(90deg,transparent 0 5.7px,#2a2a3a 5.7px 7px) right 10px/7px 2px repeat-x"></span></div>
<div class="a " style="left:1362px;top:610px;width:206px;height:19px;background:#fff;border:1px solid #c8d8f4"></div>
<div class="a " style="left:1548px;top:611px;width:19px;height:17px;background:#fbfcfe"></div>
<div class="t" style="left:1551px;top:611px;font-size:11px;font-weight:bold;letter-spacing:0.5px;color:#111;line-height:12px">...</div>
<div class="a " style="left:1574px;top:610px;width:34px;height:19px;background:#dde9fc;border:1px solid #c8d8f4"></div>
<div class="a" style="left:1240px;top:640px;width:110px;height:16px;display:flex;font-size:10.9px;line-height:16px;white-space:nowrap;color:#1a1a1a"><span>Zdroj</span><span style="flex:1;margin-left:6px;background:linear-gradient(90deg,transparent 0 5.7px,#2a2a3a 5.7px 7px) right 10px/7px 2px repeat-x"></span></div>
<div class="a " style="left:1362px;top:634px;width:206px;height:19px;background:#fff;border:1px solid #c8d8f4"></div>
<div class="a " style="left:1548px;top:635px;width:19px;height:17px;background:#fbfcfe"></div>
<div class="t" style="left:1551px;top:635px;font-size:11px;font-weight:bold;letter-spacing:0.5px;color:#111;line-height:12px">...</div>
<div class="a " style="left:1574px;top:634px;width:34px;height:19px;background:#dde9fc;border:1px solid #c8d8f4"></div>
<div class="a" style="left:1240px;top:664px;width:110px;height:16px;display:flex;font-size:10.9px;line-height:16px;white-space:nowrap;color:#1a1a1a"><span>Okruh</span><span style="flex:1;margin-left:6px;background:linear-gradient(90deg,transparent 0 5.7px,#2a2a3a 5.7px 7px) right 10px/7px 2px repeat-x"></span></div>
<div class="a " style="left:1362px;top:658px;width:206px;height:19px;background:#fff;border:1px solid #c8d8f4"></div>
<div class="a " style="left:1548px;top:659px;width:19px;height:17px;background:#fbfcfe"></div>
<div class="t" style="left:1551px;top:659px;font-size:11px;font-weight:bold;letter-spacing:0.5px;color:#111;line-height:12px">...</div>
<div class="a " style="left:1574px;top:658px;width:34px;height:19px;background:#dde9fc;border:1px solid #c8d8f4"></div>
<div class="a" style="left:1240px;top:688px;width:110px;height:16px;display:flex;font-size:10.9px;line-height:16px;white-space:nowrap;color:#1a1a1a"><span>Index DPH</span><span style="flex:1;margin-left:6px;background:linear-gradient(90deg,transparent 0 5.7px,#2a2a3a 5.7px 7px) right 10px/7px 2px repeat-x"></span></div>
<div class="a " style="left:1362px;top:682px;width:118px;height:19px;background:#fff;border:1px solid #c8d8f4"></div>
<div class="a " style="left:1460px;top:683px;width:19px;height:17px;background:#fbfcfe"></div>
<div class="t" style="left:1463px;top:683px;font-size:11px;font-weight:bold;letter-spacing:0.5px;color:#111;line-height:12px">...</div>
<div class="t " style="left:1576px;top:520px;font-size:11.2px;color:#1a1a1a">Počet</div>
<div class="a" style="left:1240px;top:712px;width:166px;height:16px;display:flex;font-size:10.9px;line-height:16px;white-space:nowrap;color:#1a1a1a"><span>Len nespárované skupiny</span><span style="flex:1;margin-left:6px;background:linear-gradient(90deg,transparent 0 5.7px,#2a2a3a 5.7px 7px) right 10px/7px 2px repeat-x"></span></div>
<div class="a " style="left:1422px;top:707px;width:58px;height:19px;background:#fff;border:1px solid #c8d8f4"></div>
<svg style="left:1462px;top:711px" width="14" height="12"><path d="M3 3.5 L7 7.5 L11 3.5" stroke="#111" stroke-width="2" fill="none"/></svg>
<div class="a " style="left:682px;top:727px;width:939px;height:279px;background:#fff;border:1px solid #c8d4e2"></div>
<div class="a " style="left:682px;top:727px;width:939px;height:28px;background:#1c4966"></div>
<svg style="left:687px;top:731px" width="18" height="20"><path d="M1.5 1.5 L16 10 L1.5 18.5Z" fill="#fff"/><path d="M1.5 1.5 L16 10 L1.5 10Z" fill="#f2f2f2"/></svg>
<div class="t " style="left:708px;top:733px;font-weight:bold;font-size:11.8px;color:#fff">Saldokontová kniha - položková</div>
<div class="t " style="left:1523px;top:733px;font-weight:bold;font-size:12px;color:#fff">17</div>
<svg style="left:1542px;top:731px" width="76" height="20" fill="none" stroke="#fff"><path d="M6 10.5 H17" stroke-width="1.2"/><rect x="31.5" y="5.5" width="10" height="10" stroke-width="1.3"/><path d="M57 5.5 L66.5 15 M66.5 5.5 L57 15" stroke-width="1.5"/></svg>
<div class="a" style="left:693px;top:770px;width:67px;height:16px;display:flex;font-size:10.9px;line-height:16px;white-space:nowrap;color:#1a1a1a"><span>Účet</span><span style="flex:1;margin-left:6px;background:linear-gradient(90deg,transparent 0 5.7px,#2a2a3a 5.7px 7px) right 10px/7px 2px repeat-x"></span></div>
<div class="a " style="left:775px;top:764px;width:78px;height:19px;background:#dde9fc;border:1px solid #d0def6"></div>
<div class="t " style="left:777px;top:765px;font-weight:bold;font-size:12px;color:#1a1a1a">321001</div>
<div class="a " style="left:863px;top:764px;width:746px;height:19px;background:#dde9fc;border:1px solid #d0def6"></div>
<div class="t " style="left:865px;top:765px;font-weight:bold;font-size:12px;color:#1a1a1a">Dodávatelia</div>
<div class="a " style="left:695px;top:793px;width:914px;height:138px;background:#f7faff;border:1px solid #d6e2f4"></div>
<div class="a " style="left:696px;top:794px;width:895px;height:17px;background:linear-gradient(#fdfeff,#eef3f9)"></div>
<div class="t" style="left:698px;top:794px;font-size:10.6px;color:#222">Evidenčné číslo dokladu</div>
<div class="a " style="left:814px;top:794px;width:1px;height:17px;background:#dce8f8"></div>
<div class="t" style="left:817px;top:794px;font-size:10.6px;color:#222">Dátum zaúčtovania</div>
<div class="a " style="left:911px;top:794px;width:1px;height:17px;background:#dce8f8"></div>
<div class="t" style="left:914px;top:794px;font-size:10.6px;color:#222">Dátum uplatnenia zd. plnenia</div>
<div class="a " style="left:1055px;top:794px;width:1px;height:17px;background:#dce8f8"></div>
<div class="t" style="left:1058px;top:794px;font-size:10.6px;color:#222">Čiastka na doklade</div>
<div class="a " style="left:1149px;top:794px;width:1px;height:17px;background:#dce8f8"></div>
<div class="t" style="left:1152px;top:794px;font-size:10.6px;color:#222">Popis</div>
<div class="a " style="left:1332px;top:794px;width:1px;height:17px;background:#dce8f8"></div>
<div class="t" style="left:1335px;top:794px;font-size:10.6px;color:#222">Čiastka MD</div>
<div class="a " style="left:1396px;top:794px;width:1px;height:17px;background:#dce8f8"></div>
<div class="t" style="left:1399px;top:794px;font-size:10.6px;color:#222">Čiastka DAL</div>
<div class="a " style="left:1461px;top:794px;width:1px;height:17px;background:#dce8f8"></div>
<div class="t" style="left:1464px;top:794px;font-size:10.6px;color:#222">Index DPH</div>
<div class="a " style="left:1517px;top:794px;width:1px;height:17px;background:#dce8f8"></div>
<div class="t" style="left:1520px;top:794px;font-size:10.6px;color:#222">Variabilný s...</div>
<div class="a " style="left:696px;top:811px;width:118px;height:18px;background:#004a70"></div>
<div class="t" style="left:697px;width:117px;top:812px;font-size:11px;color:#fff;overflow:hidden">BV-2017-1-0003(2)</div>
<div class="a " style="left:815px;top:811px;width:96px;height:18px;background:#004a70"></div>
<div class="t" style="left:816px;width:95px;top:812px;font-size:11px;color:#fff;overflow:hidden">16. 5. 2017</div>
<div class="a " style="left:912px;top:811px;width:143px;height:18px;background:#004a70"></div>
<div class="t" style="left:913px;width:142px;top:812px;font-size:11px;color:#fff;overflow:hidden"></div>
<div class="a " style="left:1056px;top:811px;width:93px;height:18px;background:#004a70"></div>
<div class="t" style="left:1056px;width:90px;top:812px;text-align:right;font-size:11px;color:#fff;overflow:hidden">20,00</div>
<div class="a " style="left:1150px;top:811px;width:182px;height:18px;background:#004a70"></div>
<div class="t" style="left:1151px;width:181px;top:812px;font-size:11px;color:#fff;overflow:hidden">Úhrada dokladu&nbsp; FPT-2014-1-000004</div>
<div class="a " style="left:1333px;top:811px;width:63px;height:18px;background:#004a70"></div>
<div class="t" style="left:1333px;width:60px;top:812px;text-align:right;font-size:11px;color:#fff;overflow:hidden">20,00</div>
<div class="a " style="left:1397px;top:811px;width:64px;height:18px;background:#004a70"></div>
<div class="t" style="left:1397px;width:61px;top:812px;text-align:right;font-size:11px;color:#fff;overflow:hidden"></div>
<div class="a " style="left:1462px;top:811px;width:55px;height:18px;background:#004a70"></div>
<div class="t" style="left:1463px;width:54px;top:812px;font-size:11px;color:#fff;overflow:hidden">000</div>
<div class="a " style="left:1518px;top:811px;width:73px;height:18px;background:#004a70"></div>
<div class="t" style="left:1519px;width:71px;top:812px;font-size:11px;color:#fff;overflow:hidden">32156465</div>
<div class="a " style="left:696px;top:829px;width:118px;height:18px;background:#cddcf7"></div>
<div class="t" style="left:697px;width:117px;top:830px;font-size:11px;color:#111;overflow:hidden">FPT-2017-1-000002</div>
<div class="a " style="left:815px;top:829px;width:96px;height:18px;background:#cddcf7"></div>
<div class="t" style="left:816px;width:95px;top:830px;font-size:11px;color:#111;overflow:hidden">29. 3. 2017</div>
<div class="a " style="left:912px;top:829px;width:143px;height:18px;background:#cddcf7"></div>
<div class="t" style="left:913px;width:142px;top:830px;font-size:11px;color:#111;overflow:hidden">29. 3. 2017</div>
<div class="a " style="left:1056px;top:829px;width:93px;height:18px;background:#cddcf7"></div>
<div class="t" style="left:1056px;width:90px;top:830px;text-align:right;font-size:11px;color:#111;overflow:hidden">199,00</div>
<div class="a " style="left:1150px;top:829px;width:182px;height:18px;background:#cddcf7"></div>
<div class="t" style="left:1151px;width:181px;top:830px;font-size:11px;color:#111;overflow:hidden">Nákup tovaru</div>
<div class="a " style="left:1333px;top:829px;width:63px;height:18px;background:#cddcf7"></div>
<div class="t" style="left:1333px;width:60px;top:830px;text-align:right;font-size:11px;color:#111;overflow:hidden"></div>
<div class="a " style="left:1397px;top:829px;width:64px;height:18px;background:#cddcf7"></div>
<div class="t" style="left:1397px;width:61px;top:830px;text-align:right;font-size:11px;color:#111;overflow:hidden">165,83</div>
<div class="a " style="left:1462px;top:829px;width:55px;height:18px;background:#cddcf7"></div>
<div class="t" style="left:1463px;width:54px;top:830px;font-size:11px;color:#111;overflow:hidden">114</div>
<div class="a " style="left:1518px;top:829px;width:73px;height:18px;background:#cddcf7"></div>
<div class="t" style="left:1519px;width:71px;top:830px;font-size:11px;color:#111;overflow:hidden">1234</div>
<div class="a " style="left:696px;top:847px;width:118px;height:18px;background:#e0eafb"></div>
<div class="t" style="left:697px;width:117px;top:848px;font-size:11px;color:#111;overflow:hidden">FPT-2017-1-000002</div>
<div class="a " style="left:815px;top:847px;width:96px;height:18px;background:#e0eafb"></div>
<div class="t" style="left:816px;width:95px;top:848px;font-size:11px;color:#111;overflow:hidden">29. 3. 2017</div>
<div class="a " style="left:912px;top:847px;width:143px;height:18px;background:#e0eafb"></div>
<div class="t" style="left:913px;width:142px;top:848px;font-size:11px;color:#111;overflow:hidden">29. 3. 2017</div>
<div class="a " style="left:1056px;top:847px;width:93px;height:18px;background:#e0eafb"></div>
<div class="t" style="left:1056px;width:90px;top:848px;text-align:right;font-size:11px;color:#111;overflow:hidden">199,00</div>
<div class="a " style="left:1150px;top:847px;width:182px;height:18px;background:#e0eafb"></div>
<div class="t" style="left:1151px;width:181px;top:848px;font-size:11px;color:#111;overflow:hidden">DPH na vstupe</div>
<div class="a " style="left:1333px;top:847px;width:63px;height:18px;background:#e0eafb"></div>
<div class="t" style="left:1333px;width:60px;top:848px;text-align:right;font-size:11px;color:#111;overflow:hidden"></div>
<div class="a " style="left:1397px;top:847px;width:64px;height:18px;background:#e0eafb"></div>
<div class="t" style="left:1397px;width:61px;top:848px;text-align:right;font-size:11px;color:#111;overflow:hidden">33,17</div>
<div class="a " style="left:1462px;top:847px;width:55px;height:18px;background:#e0eafb"></div>
<div class="t" style="left:1463px;width:54px;top:848px;font-size:11px;color:#111;overflow:hidden">214</div>
<div class="a " style="left:1518px;top:847px;width:73px;height:18px;background:#e0eafb"></div>
<div class="t" style="left:1519px;width:71px;top:848px;font-size:11px;color:#111;overflow:hidden">1234</div>
<div class="a " style="left:696px;top:865px;width:118px;height:18px;background:#cddcf7"></div>
<div class="t" style="left:697px;width:117px;top:866px;font-size:11px;color:#111;overflow:hidden">FPT-2017-1-000004</div>
<div class="a " style="left:815px;top:865px;width:96px;height:18px;background:#cddcf7"></div>
<div class="t" style="left:816px;width:95px;top:866px;font-size:11px;color:#111;overflow:hidden">19. 5. 2017</div>
<div class="a " style="left:912px;top:865px;width:143px;height:18px;background:#cddcf7"></div>
<div class="t" style="left:913px;width:142px;top:866px;font-size:11px;color:#111;overflow:hidden">19. 5. 2017</div>
<div class="a " style="left:1056px;top:865px;width:93px;height:18px;background:#cddcf7"></div>
<div class="t" style="left:1056px;width:90px;top:866px;text-align:right;font-size:11px;color:#111;overflow:hidden">1 000,00</div>
<div class="a " style="left:1150px;top:865px;width:182px;height:18px;background:#cddcf7"></div>
<div class="t" style="left:1151px;width:181px;top:866px;font-size:11px;color:#111;overflow:hidden">Tovar</div>
<div class="a " style="left:1333px;top:865px;width:63px;height:18px;background:#cddcf7"></div>
<div class="t" style="left:1333px;width:60px;top:866px;text-align:right;font-size:11px;color:#111;overflow:hidden"></div>
<div class="a " style="left:1397px;top:865px;width:64px;height:18px;background:#cddcf7"></div>
<div class="t" style="left:1397px;width:61px;top:866px;text-align:right;font-size:11px;color:#111;overflow:hidden">833,33</div>
<div class="a " style="left:1462px;top:865px;width:55px;height:18px;background:#cddcf7"></div>
<div class="t" style="left:1463px;width:54px;top:866px;font-size:11px;color:#111;overflow:hidden">114</div>
<div class="a " style="left:1518px;top:865px;width:73px;height:18px;background:#cddcf7"></div>
<div class="t" style="left:1519px;width:71px;top:866px;font-size:11px;color:#111;overflow:hidden">1239</div>
<div class="a " style="left:696px;top:883px;width:118px;height:18px;background:#e0eafb"></div>
<div class="t" style="left:697px;width:117px;top:884px;font-size:11px;color:#111;overflow:hidden">FPT-2017-1-000004</div>
<div class="a " style="left:815px;top:883px;width:96px;height:18px;background:#e0eafb"></div>
<div class="t" style="left:816px;width:95px;top:884px;font-size:11px;color:#111;overflow:hidden">19. 5. 2017</div>
<div class="a " style="left:912px;top:883px;width:143px;height:18px;background:#e0eafb"></div>
<div class="t" style="left:913px;width:142px;top:884px;font-size:11px;color:#111;overflow:hidden">19. 5. 2017</div>
<div class="a " style="left:1056px;top:883px;width:93px;height:18px;background:#e0eafb"></div>
<div class="t" style="left:1056px;width:90px;top:884px;text-align:right;font-size:11px;color:#111;overflow:hidden">1 000,00</div>
<div class="a " style="left:1150px;top:883px;width:182px;height:18px;background:#e0eafb"></div>
<div class="t" style="left:1151px;width:181px;top:884px;font-size:11px;color:#111;overflow:hidden">DPH na vstupe</div>
<div class="a " style="left:1333px;top:883px;width:63px;height:18px;background:#e0eafb"></div>
<div class="t" style="left:1333px;width:60px;top:884px;text-align:right;font-size:11px;color:#111;overflow:hidden"></div>
<div class="a " style="left:1397px;top:883px;width:64px;height:18px;background:#e0eafb"></div>
<div class="t" style="left:1397px;width:61px;top:884px;text-align:right;font-size:11px;color:#111;overflow:hidden">166,67</div>
<div class="a " style="left:1462px;top:883px;width:55px;height:18px;background:#e0eafb"></div>
<div class="t" style="left:1463px;width:54px;top:884px;font-size:11px;color:#111;overflow:hidden">214</div>
<div class="a " style="left:1518px;top:883px;width:73px;height:18px;background:#e0eafb"></div>
<div class="t" style="left:1519px;width:71px;top:884px;font-size:11px;color:#111;overflow:hidden">1239</div>
<div class="a " style="left:696px;top:811px;width:119px;height:18px;border:1.5px solid #d02030"></div>
<div class="a " style="left:1591px;top:794px;width:17px;height:119px;background:#f2f6fa"></div>
<div class="a " style="left:1591px;top:811px;width:17px;height:42px;background:#d7e4f2"></div>
<svg style="left:1592px;top:795px" width="14" height="12"><path d="M3 8 L7 4 L11 8" stroke="#111" stroke-width="2" fill="none"/></svg>
<svg style="left:1592px;top:899px" width="14" height="12"><path d="M3 4 L7 8 L11 4" stroke="#111" stroke-width="2" fill="none"/></svg>
<div class="a " style="left:696px;top:912px;width:895px;height:18px;background:#f2f6fa"></div>
<div class="a " style="left:713px;top:913px;width:17px;height:17px;background:#d7e4f2"></div>
<svg style="left:698px;top:915px" width="12" height="14"><path d="M8 3 L4 7 L8 11" stroke="#111" stroke-width="2" fill="none"/></svg>
<svg style="left:1577px;top:915px" width="12" height="14"><path d="M4 3 L8 7 L4 11" stroke="#111" stroke-width="2" fill="none"/></svg>
<div class="t " style="left:694px;top:954px;font-size:11.2px;color:#1a1a1a">Počiatočný stav</div>
<div class="a " style="left:695px;top:973px;width:118px;height:19px;background:#dde9fc;border:1px solid #d0def6"></div>
<div class="t" style="left:695px;width:114px;top:975px;text-align:right;font-size:11.4px;color:#1a1a1a">0,00</div>
<div class="t " style="left:818px;top:954px;font-size:11.2px;color:#1a1a1a">Obrat MD</div>
<div class="a " style="left:819px;top:973px;width:118px;height:19px;background:#dde9fc;border:1px solid #d0def6"></div>
<div class="t" style="left:819px;width:114px;top:975px;text-align:right;font-size:11.4px;color:#1a1a1a">20,00</div>
<div class="t " style="left:942px;top:954px;font-size:11.2px;color:#1a1a1a">Obrat DAL</div>
<div class="a " style="left:943px;top:973px;width:118px;height:19px;background:#dde9fc;border:1px solid #d0def6"></div>
<div class="t" style="left:943px;width:114px;top:975px;text-align:right;font-size:11.4px;color:#1a1a1a">7 655,00</div>
<div class="t " style="left:1066px;top:954px;font-size:11.2px;color:#1a1a1a">Zmena stavu</div>
<div class="a " style="left:1067px;top:973px;width:118px;height:19px;background:#dde9fc;border:1px solid #d0def6"></div>
<div class="t" style="left:1067px;width:114px;top:975px;text-align:right;font-size:11.4px;color:#8a0000">-7 635,00</div>
<div class="t " style="left:1190px;top:954px;font-size:11.2px;color:#1a1a1a">Zostatok</div>
<div class="a " style="left:1191px;top:973px;width:118px;height:19px;background:#dde9fc;border:1px solid #d0def6"></div>
<div class="t" style="left:1191px;width:114px;top:975px;text-align:right;font-size:11.4px;color:#8a0000">-7 635,00</div>
<div class="a " style="left:1315px;top:973px;width:26px;height:19px;background:#dde9fc;border:1px solid #d0def6"></div>
<div class="t " style="left:1317px;top:974px;font-weight:bold;font-size:11.4px;color:#1a1a1a">EUR</div>
<div class="a " style="left:1351px;top:949px;width:13px;height:13px;background:#fff;border:1px solid #8a8a8a"></div>
<div class="t " style="left:1368px;top:948px;font-size:11.2px;color:#1a1a1a">Zobraziť vyradené</div>
<div class="a " style="left:1482px;top:944px;width:128px;height:22px;background:#4f88b8"></div><div class="t" style="left:1482px;width:128px;top:947.0px;text-align:center;font-size:10.9px;color:#fff">Zobrazenie dokladu</div>
<div class="a " style="left:1350px;top:972px;width:128px;height:22px;background:#4f88b8"></div><div class="t" style="left:1350px;width:120px;top:975.0px;text-align:center;font-size:10.9px;color:#fff">Operácie zo skupinou</div><svg style="left:1466px;top:978.0px" width="8" height="10"><path d="M1 1 L6 5 L1 9Z" fill="#fff"/></svg>
<div class="a " style="left:1482px;top:972px;width:128px;height:22px;background:#4f88b8"></div><div class="t" style="left:1482px;width:120px;top:975.0px;text-align:center;font-size:10.9px;color:#fff">Ručné párovanie</div><svg style="left:1598px;top:978.0px" width="8" height="10"><path d="M1 1 L6 5 L1 9Z" fill="#fff"/></svg>
</body></html>
